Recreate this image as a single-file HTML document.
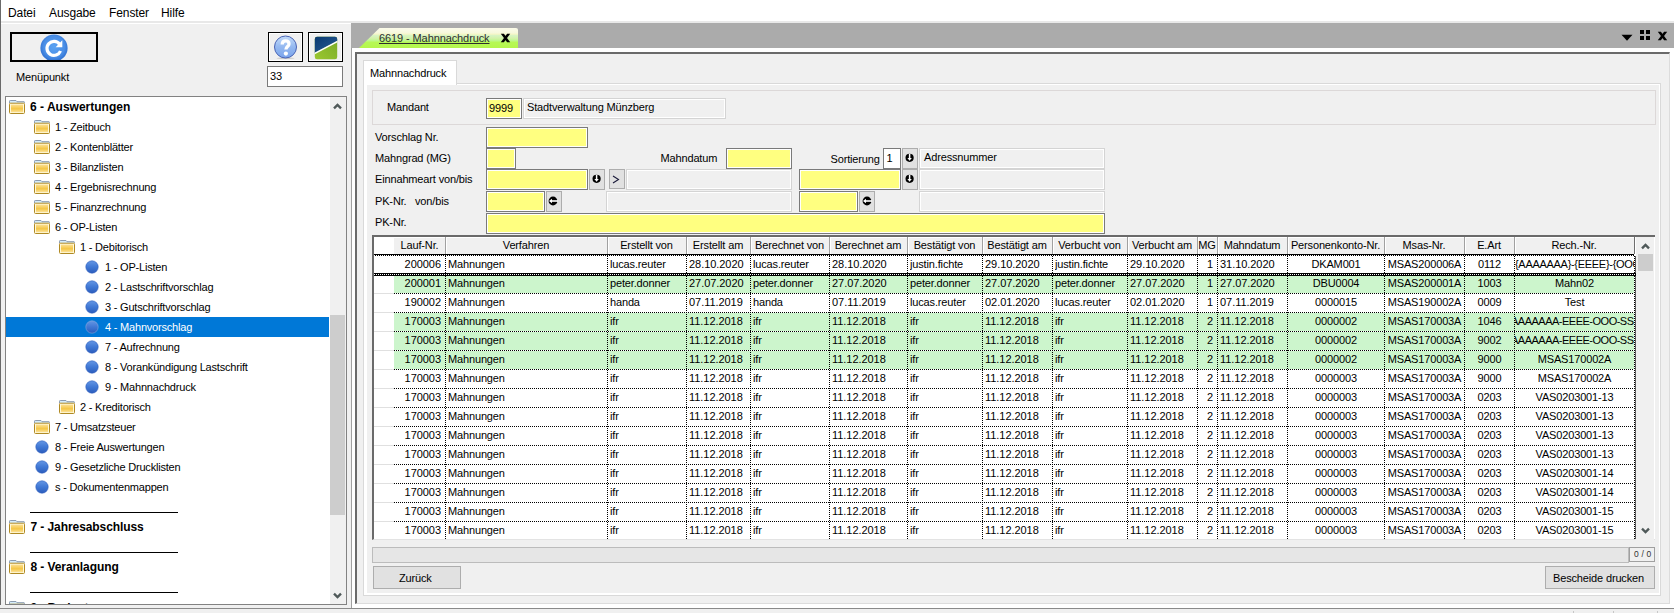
<!DOCTYPE html><html><head><meta charset="utf-8"><style>
html,body{margin:0;padding:0;}
body{width:1674px;height:613px;position:relative;overflow:hidden;background:#f0f0f0;font-family:"Liberation Sans", sans-serif;}
.t{position:absolute;white-space:nowrap;}
.r{position:absolute;box-sizing:border-box;}
svg{position:absolute;}
</style></head><body>
<div class="r" style="left:0px;top:0px;width:1674px;height:21px;background:#fff;"></div>
<div class="r" style="left:0px;top:21px;width:1674px;height:2px;background:#e8e8e8;"></div>
<div class="r" style="left:0px;top:23px;width:351px;height:1px;background:#fff;"></div>
<div class="r" style="left:0px;top:0px;width:1px;height:609px;background:#6a6a6a;"></div>
<div class="t" style="left:8px;top:6px;font-size:12px;line-height:14px;color:#000;letter-spacing:-0.1px;">Datei</div>
<div class="t" style="left:49px;top:6px;font-size:12px;line-height:14px;color:#000;letter-spacing:-0.1px;">Ausgabe</div>
<div class="t" style="left:109px;top:6px;font-size:12px;line-height:14px;color:#000;letter-spacing:-0.1px;">Fenster</div>
<div class="t" style="left:161px;top:6px;font-size:12px;line-height:14px;color:#000;letter-spacing:-0.1px;">Hilfe</div>
<div class="r" style="left:10px;top:32px;width:88px;height:30px;border:2px solid #000;background:#f0f0f0;"></div>
<div style="position:absolute;left:12px;top:34px;width:84px;height:26px;overflow:hidden">
<svg style="left:28px;top:0px" width="28" height="28" viewBox="0 0 28 28">
<defs><radialGradient id="rg" cx="50%" cy="45%" r="55%"><stop offset="0" stop-color="#5aa2f2"/><stop offset="0.7" stop-color="#4a8ee6"/><stop offset="1" stop-color="#2e6fd0"/></radialGradient></defs>
<circle cx="14" cy="14" r="13.6" fill="url(#rg)"/>
<path d="M19.6 10.2 A7 7 0 1 0 20.5 17" fill="none" stroke="#fff" stroke-width="3.2"/>
<path d="M22.3 6.2 L22.3 13.2 L15.6 13.2 Z" fill="#fff"/>
</svg>
</div>
<div class="t" style="left:16px;top:71px;font-size:11px;line-height:13px;color:#000;letter-spacing:-0.15px;">Menüpunkt</div>
<div class="r" style="left:268px;top:32px;width:35px;height:30px;border:1px solid #000;box-shadow:inset 0 0 0 1px #fff;background:#f0f0f0;"></div>
<svg style="left:273px;top:35px" width="25" height="25" viewBox="0 0 25 25">
<defs><linearGradient id="hg" x1="0" y1="0" x2="0" y2="1"><stop offset="0" stop-color="#c4dcfa"/><stop offset="0.5" stop-color="#94b8f0"/><stop offset="1" stop-color="#7aa4ec"/></linearGradient></defs>
<ellipse cx="12.5" cy="23.2" rx="9" ry="0.8" fill="#c8c8c8"/>
<circle cx="12.5" cy="12" r="11" fill="url(#hg)" stroke="#4a64b4" stroke-width="1"/>
<path d="M9.2 9.4 C9.2 6.8 10.8 5.9 12.6 5.9 C14.8 5.9 16 7.2 16 8.9 C16 11.6 12.9 11.6 12.9 14.6" fill="none" stroke="#fff" stroke-width="3.3"/><circle cx="12.9" cy="18.6" r="2.1" fill="#fff"/>
</svg>
<div class="r" style="left:308px;top:32px;width:35px;height:30px;border:1px solid #000;box-shadow:inset 0 0 0 1px #fff;background:#f0f0f0;"></div>
<svg style="left:314px;top:36px" width="24" height="24" viewBox="0 0 24 24">
<defs><clipPath id="lc"><rect x="0.8" y="0.8" width="22.4" height="22.4" rx="2.2"/></clipPath>
<linearGradient id="bl" x1="0" y1="0" x2="1" y2="1"><stop offset="0" stop-color="#08386e"/><stop offset="1" stop-color="#2a5e98"/></linearGradient>
<linearGradient id="gr" x1="0" y1="1" x2="1" y2="0"><stop offset="0" stop-color="#9cc830"/><stop offset="1" stop-color="#78aa28"/></linearGradient></defs>
<g clip-path="url(#lc)">
<rect x="0" y="0" width="24" height="24" fill="url(#gr)"/>
<path d="M0 0 L24 0 L24 4.6 L0 17.2 Z" fill="url(#bl)"/>
<path d="M0 17.8 L24 5.2" stroke="#fff" stroke-width="1.3"/>
</g></svg>
<div class="r" style="left:267px;top:66px;width:76px;height:21px;border:1px solid #7a7a7a;background:#fff;"></div>
<div class="t" style="left:270px;top:70px;font-size:11px;line-height:13px;color:#000;">33</div>
<div class="r" style="left:5px;top:96px;width:342px;height:509px;border:1px solid #828282;background:#fff;"></div>
<div class="r" style="left:330px;top:97px;width:16px;height:507px;background:#f0f0f0;"></div>
<div class="r" style="left:330px;top:315px;width:15px;height:200px;background:#cdcdcd;"></div>
<svg style="left:333px;top:102px" width="9" height="8" viewBox="0 0 9 8"><path d="M1 6.4 L4.5 2.9 L8 6.4" fill="none" stroke="#4f5959" stroke-width="2.3"/></svg>
<svg style="left:333px;top:592px" width="9" height="8" viewBox="0 0 9 8"><path d="M1 1.6 L4.5 5.1 L8 1.6" fill="none" stroke="#4f5959" stroke-width="2.3"/></svg>
<svg width="0" height="0" style="position:absolute"><defs>
<linearGradient id="fg" x1="0" y1="0" x2="0" y2="1"><stop offset="0" stop-color="#fcdf92"/><stop offset="0.55" stop-color="#f4c646"/><stop offset="1" stop-color="#fce29a"/></linearGradient>
<linearGradient id="cg" x1="0" y1="0" x2="0" y2="1"><stop offset="0" stop-color="#6496e4"/><stop offset="0.5" stop-color="#4078d4"/><stop offset="1" stop-color="#2c5cbc"/></linearGradient>
</defs></svg>
<div class="r" style="left:6px;top:317px;width:323px;height:20px;background:#0078d7;"></div>
<svg style="left:9px;top:100px" width="16" height="14" viewBox="0 0 16 14">
<path d="M0.5 3 L0.5 1.2 Q0.5 0.5 1.2 0.5 L7 0.5 L8 1.7 L15 1.7 Q15.5 1.7 15.5 2.4 L15.5 3" fill="#d4ecfc" stroke="#8c9cb0" stroke-width="1"/>
<rect x="0.5" y="3.2" width="15" height="10.3" rx="1" fill="#fff8d8" stroke="#b08a24" stroke-width="1"/>
<rect x="2" y="4.6" width="12" height="7.6" fill="url(#fg)"/>
</svg>
<div class="t" style="left:30px;top:100px;font-size:12px;line-height:14px;color:#000;font-weight:bold;letter-spacing:0px;">6 - Auswertungen</div>
<svg style="left:34px;top:120px" width="16" height="14" viewBox="0 0 16 14">
<path d="M0.5 3 L0.5 1.2 Q0.5 0.5 1.2 0.5 L7 0.5 L8 1.7 L15 1.7 Q15.5 1.7 15.5 2.4 L15.5 3" fill="#d4ecfc" stroke="#8c9cb0" stroke-width="1"/>
<rect x="0.5" y="3.2" width="15" height="10.3" rx="1" fill="#fff8d8" stroke="#b08a24" stroke-width="1"/>
<rect x="2" y="4.6" width="12" height="7.6" fill="url(#fg)"/>
</svg>
<div class="t" style="left:55px;top:121px;font-size:11px;line-height:13px;color:#000;letter-spacing:-0.2px;">1 - Zeitbuch</div>
<svg style="left:34px;top:140px" width="16" height="14" viewBox="0 0 16 14">
<path d="M0.5 3 L0.5 1.2 Q0.5 0.5 1.2 0.5 L7 0.5 L8 1.7 L15 1.7 Q15.5 1.7 15.5 2.4 L15.5 3" fill="#d4ecfc" stroke="#8c9cb0" stroke-width="1"/>
<rect x="0.5" y="3.2" width="15" height="10.3" rx="1" fill="#fff8d8" stroke="#b08a24" stroke-width="1"/>
<rect x="2" y="4.6" width="12" height="7.6" fill="url(#fg)"/>
</svg>
<div class="t" style="left:55px;top:141px;font-size:11px;line-height:13px;color:#000;letter-spacing:-0.2px;">2 - Kontenblätter</div>
<svg style="left:34px;top:160px" width="16" height="14" viewBox="0 0 16 14">
<path d="M0.5 3 L0.5 1.2 Q0.5 0.5 1.2 0.5 L7 0.5 L8 1.7 L15 1.7 Q15.5 1.7 15.5 2.4 L15.5 3" fill="#d4ecfc" stroke="#8c9cb0" stroke-width="1"/>
<rect x="0.5" y="3.2" width="15" height="10.3" rx="1" fill="#fff8d8" stroke="#b08a24" stroke-width="1"/>
<rect x="2" y="4.6" width="12" height="7.6" fill="url(#fg)"/>
</svg>
<div class="t" style="left:55px;top:161px;font-size:11px;line-height:13px;color:#000;letter-spacing:-0.2px;">3 - Bilanzlisten</div>
<svg style="left:34px;top:180px" width="16" height="14" viewBox="0 0 16 14">
<path d="M0.5 3 L0.5 1.2 Q0.5 0.5 1.2 0.5 L7 0.5 L8 1.7 L15 1.7 Q15.5 1.7 15.5 2.4 L15.5 3" fill="#d4ecfc" stroke="#8c9cb0" stroke-width="1"/>
<rect x="0.5" y="3.2" width="15" height="10.3" rx="1" fill="#fff8d8" stroke="#b08a24" stroke-width="1"/>
<rect x="2" y="4.6" width="12" height="7.6" fill="url(#fg)"/>
</svg>
<div class="t" style="left:55px;top:181px;font-size:11px;line-height:13px;color:#000;letter-spacing:-0.2px;">4 - Ergebnisrechnung</div>
<svg style="left:34px;top:200px" width="16" height="14" viewBox="0 0 16 14">
<path d="M0.5 3 L0.5 1.2 Q0.5 0.5 1.2 0.5 L7 0.5 L8 1.7 L15 1.7 Q15.5 1.7 15.5 2.4 L15.5 3" fill="#d4ecfc" stroke="#8c9cb0" stroke-width="1"/>
<rect x="0.5" y="3.2" width="15" height="10.3" rx="1" fill="#fff8d8" stroke="#b08a24" stroke-width="1"/>
<rect x="2" y="4.6" width="12" height="7.6" fill="url(#fg)"/>
</svg>
<div class="t" style="left:55px;top:201px;font-size:11px;line-height:13px;color:#000;letter-spacing:-0.2px;">5 - Finanzrechnung</div>
<svg style="left:34px;top:220px" width="16" height="14" viewBox="0 0 16 14">
<path d="M0.5 3 L0.5 1.2 Q0.5 0.5 1.2 0.5 L7 0.5 L8 1.7 L15 1.7 Q15.5 1.7 15.5 2.4 L15.5 3" fill="#d4ecfc" stroke="#8c9cb0" stroke-width="1"/>
<rect x="0.5" y="3.2" width="15" height="10.3" rx="1" fill="#fff8d8" stroke="#b08a24" stroke-width="1"/>
<rect x="2" y="4.6" width="12" height="7.6" fill="url(#fg)"/>
</svg>
<div class="t" style="left:55px;top:221px;font-size:11px;line-height:13px;color:#000;letter-spacing:-0.2px;">6 - OP-Listen</div>
<svg style="left:59px;top:240px" width="16" height="14" viewBox="0 0 16 14">
<path d="M0.5 3 L0.5 1.2 Q0.5 0.5 1.2 0.5 L7 0.5 L8 1.7 L15 1.7 Q15.5 1.7 15.5 2.4 L15.5 3" fill="#d4ecfc" stroke="#8c9cb0" stroke-width="1"/>
<rect x="0.5" y="3.2" width="15" height="10.3" rx="1" fill="#fff8d8" stroke="#b08a24" stroke-width="1"/>
<rect x="2" y="4.6" width="12" height="7.6" fill="url(#fg)"/>
</svg>
<div class="t" style="left:80px;top:241px;font-size:11px;line-height:13px;color:#000;letter-spacing:-0.2px;">1 - Debitorisch</div>
<svg style="left:85px;top:260px" width="14" height="14" viewBox="0 0 14 14"><circle cx="7" cy="7" r="6.2" fill="url(#cg)" stroke="#3060c0" stroke-width="0.6"/></svg>
<div class="t" style="left:105px;top:261px;font-size:11px;line-height:13px;color:#000;letter-spacing:-0.2px;">1 - OP-Listen</div>
<svg style="left:85px;top:280px" width="14" height="14" viewBox="0 0 14 14"><circle cx="7" cy="7" r="6.2" fill="url(#cg)" stroke="#3060c0" stroke-width="0.6"/></svg>
<div class="t" style="left:105px;top:281px;font-size:11px;line-height:13px;color:#000;letter-spacing:-0.2px;">2 - Lastschriftvorschlag</div>
<svg style="left:85px;top:300px" width="14" height="14" viewBox="0 0 14 14"><circle cx="7" cy="7" r="6.2" fill="url(#cg)" stroke="#3060c0" stroke-width="0.6"/></svg>
<div class="t" style="left:105px;top:301px;font-size:11px;line-height:13px;color:#000;letter-spacing:-0.2px;">3 - Gutschriftvorschlag</div>
<svg style="left:85px;top:320px" width="14" height="14" viewBox="0 0 14 14"><circle cx="7" cy="7" r="6.2" fill="url(#cg)" stroke="#8aa8d8" stroke-width="0.6"/></svg>
<div class="t" style="left:105px;top:321px;font-size:11px;line-height:13px;color:#fff;letter-spacing:-0.2px;">4 - Mahnvorschlag</div>
<svg style="left:85px;top:340px" width="14" height="14" viewBox="0 0 14 14"><circle cx="7" cy="7" r="6.2" fill="url(#cg)" stroke="#3060c0" stroke-width="0.6"/></svg>
<div class="t" style="left:105px;top:341px;font-size:11px;line-height:13px;color:#000;letter-spacing:-0.2px;">7 - Aufrechnung</div>
<svg style="left:85px;top:360px" width="14" height="14" viewBox="0 0 14 14"><circle cx="7" cy="7" r="6.2" fill="url(#cg)" stroke="#3060c0" stroke-width="0.6"/></svg>
<div class="t" style="left:105px;top:361px;font-size:11px;line-height:13px;color:#000;letter-spacing:-0.2px;">8 - Vorankündigung Lastschrift</div>
<svg style="left:85px;top:380px" width="14" height="14" viewBox="0 0 14 14"><circle cx="7" cy="7" r="6.2" fill="url(#cg)" stroke="#3060c0" stroke-width="0.6"/></svg>
<div class="t" style="left:105px;top:381px;font-size:11px;line-height:13px;color:#000;letter-spacing:-0.2px;">9 - Mahnnachdruck</div>
<svg style="left:59px;top:400px" width="16" height="14" viewBox="0 0 16 14">
<path d="M0.5 3 L0.5 1.2 Q0.5 0.5 1.2 0.5 L7 0.5 L8 1.7 L15 1.7 Q15.5 1.7 15.5 2.4 L15.5 3" fill="#d4ecfc" stroke="#8c9cb0" stroke-width="1"/>
<rect x="0.5" y="3.2" width="15" height="10.3" rx="1" fill="#fff8d8" stroke="#b08a24" stroke-width="1"/>
<rect x="2" y="4.6" width="12" height="7.6" fill="url(#fg)"/>
</svg>
<div class="t" style="left:80px;top:401px;font-size:11px;line-height:13px;color:#000;letter-spacing:-0.2px;">2 - Kreditorisch</div>
<svg style="left:34px;top:420px" width="16" height="14" viewBox="0 0 16 14">
<path d="M0.5 3 L0.5 1.2 Q0.5 0.5 1.2 0.5 L7 0.5 L8 1.7 L15 1.7 Q15.5 1.7 15.5 2.4 L15.5 3" fill="#d4ecfc" stroke="#8c9cb0" stroke-width="1"/>
<rect x="0.5" y="3.2" width="15" height="10.3" rx="1" fill="#fff8d8" stroke="#b08a24" stroke-width="1"/>
<rect x="2" y="4.6" width="12" height="7.6" fill="url(#fg)"/>
</svg>
<div class="t" style="left:55px;top:421px;font-size:11px;line-height:13px;color:#000;letter-spacing:-0.2px;">7 - Umsatzsteuer</div>
<svg style="left:35px;top:440px" width="14" height="14" viewBox="0 0 14 14"><circle cx="7" cy="7" r="6.2" fill="url(#cg)" stroke="#3060c0" stroke-width="0.6"/></svg>
<div class="t" style="left:55px;top:441px;font-size:11px;line-height:13px;color:#000;letter-spacing:-0.2px;">8 - Freie Auswertungen</div>
<svg style="left:35px;top:460px" width="14" height="14" viewBox="0 0 14 14"><circle cx="7" cy="7" r="6.2" fill="url(#cg)" stroke="#3060c0" stroke-width="0.6"/></svg>
<div class="t" style="left:55px;top:461px;font-size:11px;line-height:13px;color:#000;letter-spacing:-0.2px;">9 - Gesetzliche Drucklisten</div>
<svg style="left:35px;top:480px" width="14" height="14" viewBox="0 0 14 14"><circle cx="7" cy="7" r="6.2" fill="url(#cg)" stroke="#3060c0" stroke-width="0.6"/></svg>
<div class="t" style="left:55px;top:481px;font-size:11px;line-height:13px;color:#000;letter-spacing:-0.2px;">s - Dokumentenmappen</div>
<div class="r" style="left:30px;top:512px;width:148px;height:1px;background:#000;"></div>
<svg style="left:9px;top:520px" width="16" height="14" viewBox="0 0 16 14">
<path d="M0.5 3 L0.5 1.2 Q0.5 0.5 1.2 0.5 L7 0.5 L8 1.7 L15 1.7 Q15.5 1.7 15.5 2.4 L15.5 3" fill="#d4ecfc" stroke="#8c9cb0" stroke-width="1"/>
<rect x="0.5" y="3.2" width="15" height="10.3" rx="1" fill="#fff8d8" stroke="#b08a24" stroke-width="1"/>
<rect x="2" y="4.6" width="12" height="7.6" fill="url(#fg)"/>
</svg>
<div class="t" style="left:30.5px;top:520px;font-size:12px;line-height:14px;color:#000;font-weight:bold;letter-spacing:-0.08px;">7 - Jahresabschluss</div>
<div class="r" style="left:30px;top:552px;width:148px;height:1px;background:#000;"></div>
<svg style="left:9px;top:560px" width="16" height="14" viewBox="0 0 16 14">
<path d="M0.5 3 L0.5 1.2 Q0.5 0.5 1.2 0.5 L7 0.5 L8 1.7 L15 1.7 Q15.5 1.7 15.5 2.4 L15.5 3" fill="#d4ecfc" stroke="#8c9cb0" stroke-width="1"/>
<rect x="0.5" y="3.2" width="15" height="10.3" rx="1" fill="#fff8d8" stroke="#b08a24" stroke-width="1"/>
<rect x="2" y="4.6" width="12" height="7.6" fill="url(#fg)"/>
</svg>
<div class="t" style="left:30.5px;top:560px;font-size:12px;line-height:14px;color:#000;font-weight:bold;letter-spacing:-0.08px;">8 - Veranlagung</div>
<div class="r" style="left:30px;top:592px;width:148px;height:1px;background:#000;"></div>
<svg style="left:9px;top:601px" width="16" height="14" viewBox="0 0 16 14">
<path d="M0.5 3 L0.5 1.2 Q0.5 0.5 1.2 0.5 L7 0.5 L8 1.7 L15 1.7 Q15.5 1.7 15.5 2.4 L15.5 3" fill="#d4ecfc" stroke="#8c9cb0" stroke-width="1"/>
<rect x="0.5" y="3.2" width="15" height="10.3" rx="1" fill="#fff8d8" stroke="#b08a24" stroke-width="1"/>
<rect x="2" y="4.6" width="12" height="7.6" fill="url(#fg)"/>
</svg>
<div class="t" style="left:30.5px;top:601px;font-size:12px;line-height:14px;color:#000;font-weight:bold;letter-spacing:-0.08px;">9 - Budget</div>
<div class="r" style="left:5px;top:604px;width:342px;height:1px;background:#828282;"></div>
<div class="r" style="left:0px;top:605px;width:351px;height:4px;background:#f0f0f0;"></div>
<div class="r" style="left:351px;top:23px;width:1323px;height:25px;background:#ababab;"></div>
<svg style="left:358px;top:27px" width="162" height="22" viewBox="0 0 162 22">
<defs><linearGradient id="tg" x1="0" y1="0" x2="0" y2="1"><stop offset="0.04" stop-color="#fbfbe8"/><stop offset="0.25" stop-color="#f6f8dc"/><stop offset="0.31" stop-color="#f6f6c4"/><stop offset="0.37" stop-color="#d8f4c4"/><stop offset="0.52" stop-color="#d2f2a8"/><stop offset="0.62" stop-color="#bef890"/><stop offset="0.72" stop-color="#b6f856"/><stop offset="1" stop-color="#b4f64c"/></linearGradient></defs>
<path d="M1 21 L21.5 1 L158 1 Q160 1 160 3 L160 21 Z" fill="url(#tg)"/></svg>
<div class="t" style="left:379px;top:32px;font-size:11px;line-height:13px;color:#2e2e2e;letter-spacing:-0.1px;text-decoration:underline;">6619 - Mahnnachdruck</div>
<svg style="left:500px;top:33px" width="11" height="10" viewBox="0 0 11 10"><path d="M0.8 0.7 L3.9 0.7 L10.2 9.3 L7.1 9.3 Z M7.1 0.7 L10.2 0.7 L3.9 9.3 L0.8 9.3 Z" fill="#000"/></svg>
<svg style="left:1621px;top:34px" width="12" height="8" viewBox="0 0 12 8"><path d="M0.5 0.8 L11.5 0.8 L6 6.8 Z" fill="#000"/></svg>
<div class="r" style="left:1640px;top:30px;width:4px;height:4px;background:#000;"></div>
<div class="r" style="left:1646px;top:30px;width:4px;height:4px;background:#000;"></div>
<div class="r" style="left:1640px;top:36px;width:4px;height:4px;background:#000;"></div>
<div class="r" style="left:1646px;top:36px;width:4px;height:4px;background:#000;"></div>
<svg style="left:1657px;top:31px" width="11" height="10" viewBox="0 0 11 10"><path d="M0.8 0.7 L3.9 0.7 L10.2 9.3 L7.1 9.3 Z M7.1 0.7 L10.2 0.7 L3.9 9.3 L0.8 9.3 Z" fill="#000"/></svg>
<div class="r" style="left:351px;top:48px;width:1px;height:561px;background:#a0a0a0;"></div>
<div class="r" style="left:352px;top:48px;width:1322px;height:561px;background:#fff;"></div>
<div class="r" style="left:355px;top:52px;width:1315px;height:552px;border-left:2px solid #6a6a6a;border-top:2px solid #6a6a6a;border-right:1px solid #dcdcdc;border-bottom:1px solid #dcdcdc;background:#f0f0f0;"></div>
<div class="r" style="left:0px;top:608px;width:1674px;height:1px;background:#8a8a8a;"></div>
<div class="r" style="left:0px;top:609px;width:1674px;height:4px;background:#f0f0f0;"></div>
<div class="r" style="left:1573px;top:611px;width:1px;height:2px;background:#c8c8c8;"></div>
<div class="r" style="left:1613px;top:611px;width:1px;height:2px;background:#c8c8c8;"></div>
<div class="r" style="left:1657px;top:611px;width:1px;height:2px;background:#c8c8c8;"></div>
<div class="r" style="left:363px;top:83px;width:1298px;height:513px;border:1px solid #d9d9d9;box-shadow:inset 3px 1px 0 #fff, inset -1px -2px 0 #fff;background:#f0f0f0;"></div>
<div class="r" style="left:363px;top:60px;width:94px;height:25px;border:1px solid #d9d9d9;border-bottom:none;background:#fff;"></div>
<div class="t" style="left:370px;top:67px;font-size:11px;line-height:13px;color:#000;letter-spacing:-0.15px;">Mahnnachdruck</div>
<div class="r" style="left:372px;top:90px;width:1284px;height:35px;border:1px solid #dcd8d8;"></div>
<div class="t" style="left:387px;top:100.5px;font-size:11px;line-height:13px;color:#000;letter-spacing:-0.15px;">Mandant</div>
<div class="r" style="left:486px;top:98px;width:36px;height:21px;border:1px solid #7a7a7a;box-shadow:inset 0 0 0 1px #fff;background:#ffff80;"></div>
<div class="t" style="left:489px;top:101.5px;font-size:11px;line-height:13px;color:#000;letter-spacing:-0.1px;">9999</div>
<div class="r" style="left:523px;top:98px;width:203px;height:21px;border:1px solid #d4d4d4;box-shadow:inset 0 0 0 1px #fff;background:#f0f0f0;"></div>
<div class="t" style="left:527px;top:101px;font-size:11px;line-height:13px;color:#000;letter-spacing:-0.15px;">Stadtverwaltung Münzberg</div>
<div class="t" style="left:375px;top:131px;font-size:11px;line-height:13px;color:#000;letter-spacing:-0.15px;">Vorschlag Nr.</div>
<div class="t" style="left:375px;top:152px;font-size:11px;line-height:13px;color:#000;letter-spacing:-0.15px;">Mahngrad (MG)</div>
<div class="t" style="left:375px;top:173px;font-size:11px;line-height:13px;color:#000;letter-spacing:-0.15px;">Einnahmeart von/bis</div>
<div class="t" style="left:375px;top:194.5px;font-size:11px;line-height:13px;color:#000;letter-spacing:-0.15px;">PK-Nr.</div>
<div class="t" style="left:415px;top:194.5px;font-size:11px;line-height:13px;color:#000;letter-spacing:-0.15px;">von/bis</div>
<div class="t" style="left:375px;top:216px;font-size:11px;line-height:13px;color:#000;letter-spacing:-0.15px;">PK-Nr.</div>
<div class="r" style="left:486px;top:127px;width:102px;height:21px;border:1px solid #7a7a7a;box-shadow:inset 0 0 0 1px #fff;background:#ffff80;"></div>
<div class="r" style="left:486px;top:148px;width:30px;height:21px;border:1px solid #7a7a7a;box-shadow:inset 0 0 0 1px #fff;background:#ffff80;"></div>
<div class="t" style="left:660.5px;top:152px;font-size:11px;line-height:13px;color:#000;letter-spacing:-0.15px;">Mahndatum</div>
<div class="r" style="left:726px;top:148px;width:66px;height:21px;border:1px solid #7a7a7a;box-shadow:inset 0 0 0 1px #fff;background:#ffff80;"></div>
<div class="t" style="left:830.5px;top:153px;font-size:11px;line-height:13px;color:#000;letter-spacing:-0.15px;">Sortierung</div>
<div class="r" style="left:883px;top:148px;width:18px;height:21px;border:1px solid #7a7a7a;box-shadow:inset 0 0 0 1px #fff;background:#fff;"></div>
<div class="t" style="left:886.5px;top:152px;font-size:11px;line-height:13px;color:#000;">1</div>
<div class="r" style="left:902px;top:148px;width:16px;height:21px;border:1px solid #adadad;background:#e1e1e1;"></div>
<svg style="left:905px;top:153px" width="10" height="10" viewBox="0 0 10 10"><circle cx="4.6" cy="4.8" r="4.1" fill="#000"/><path d="M4.6 0.8 L4.6 5.6" stroke="#fff" stroke-width="1.5"/><path d="M2.4 5 L6.8 5 L4.6 7.8 Z" fill="#fff"/></svg>
<div class="r" style="left:919px;top:148px;width:186px;height:21px;border:1px solid #d4d4d4;box-shadow:inset 0 0 0 1px #fff;background:#f0f0f0;"></div>
<div class="t" style="left:924px;top:151px;font-size:11px;line-height:13px;color:#000;letter-spacing:-0.15px;">Adressnummer</div>
<div class="r" style="left:486px;top:169px;width:102px;height:21px;border:1px solid #7a7a7a;box-shadow:inset 0 0 0 1px #fff;background:#ffff80;"></div>
<div class="r" style="left:589px;top:169px;width:16px;height:21px;border:1px solid #adadad;background:#e1e1e1;"></div>
<svg style="left:592px;top:174px" width="10" height="10" viewBox="0 0 10 10"><circle cx="4.6" cy="4.8" r="4.1" fill="#000"/><path d="M4.6 0.8 L4.6 5.6" stroke="#fff" stroke-width="1.5"/><path d="M2.4 5 L6.8 5 L4.6 7.8 Z" fill="#fff"/></svg>
<div class="r" style="left:609px;top:169px;width:16px;height:20px;border:1px solid #adadad;background:#e1e1e1;"></div>
<svg style="left:612px;top:175px" width="8" height="9" viewBox="0 0 8 9"><path d="M1 1 L6.5 4.5 L1 8" fill="none" stroke="#1a1a3a" stroke-width="1.1"/></svg>
<div class="r" style="left:626px;top:169px;width:166px;height:21px;border:1px solid #d4d4d4;box-shadow:inset 0 0 0 1px #fff;background:#f0f0f0;"></div>
<div class="r" style="left:799px;top:169px;width:102px;height:21px;border:1px solid #7a7a7a;box-shadow:inset 0 0 0 1px #fff;background:#ffff80;"></div>
<div class="r" style="left:902px;top:169px;width:16px;height:21px;border:1px solid #adadad;background:#e1e1e1;"></div>
<svg style="left:905px;top:174px" width="10" height="10" viewBox="0 0 10 10"><circle cx="4.6" cy="4.8" r="4.1" fill="#000"/><path d="M4.6 0.8 L4.6 5.6" stroke="#fff" stroke-width="1.5"/><path d="M2.4 5 L6.8 5 L4.6 7.8 Z" fill="#fff"/></svg>
<div class="r" style="left:919px;top:169px;width:186px;height:21px;border:1px solid #d4d4d4;box-shadow:inset 0 0 0 1px #fff;background:#f0f0f0;"></div>
<div class="r" style="left:486px;top:191px;width:59px;height:21px;border:1px solid #7a7a7a;box-shadow:inset 0 0 0 1px #fff;background:#ffff80;"></div>
<div class="r" style="left:546px;top:191px;width:16px;height:21px;border:1px solid #adadad;background:#e1e1e1;"></div>
<svg style="left:548px;top:196px" width="10" height="10" viewBox="0 0 10 10"><circle cx="5" cy="5" r="4.4" fill="#000"/><path d="M3.5 5 L10 5" stroke="#fff" stroke-width="1.6"/><path d="M1 5 L4 2.8 L4 7.2 Z" fill="#fff"/></svg>
<div class="r" style="left:606px;top:191px;width:186px;height:21px;border:1px solid #d4d4d4;box-shadow:inset 0 0 0 1px #fff;background:#f0f0f0;"></div>
<div class="r" style="left:799px;top:191px;width:59px;height:21px;border:1px solid #7a7a7a;box-shadow:inset 0 0 0 1px #fff;background:#ffff80;"></div>
<div class="r" style="left:859px;top:191px;width:16px;height:21px;border:1px solid #adadad;background:#e1e1e1;"></div>
<svg style="left:862px;top:196px" width="10" height="10" viewBox="0 0 10 10"><circle cx="5" cy="5" r="4.4" fill="#000"/><path d="M3.5 5 L10 5" stroke="#fff" stroke-width="1.6"/><path d="M1 5 L4 2.8 L4 7.2 Z" fill="#fff"/></svg>
<div class="r" style="left:919px;top:191px;width:186px;height:21px;border:1px solid #d4d4d4;box-shadow:inset 0 0 0 1px #fff;background:#f0f0f0;"></div>
<div class="r" style="left:486px;top:213px;width:619px;height:21px;border:1px solid #7a7a7a;box-shadow:inset 0 0 0 1px #fff;background:#ffff80;"></div>
<div class="r" style="left:372px;top:235px;width:1283px;height:305px;background:#fff;border-left:2px solid #6a6a6a;border-top:2px solid #6a6a6a;border-bottom:1px solid #e3e3e3;"></div>
<div class="r" style="left:394px;top:237px;width:1240px;height:17px;background:#f0f0f0;"></div>
<div class="r" style="left:394px;top:237px;width:1241px;height:1px;background:#fff;"></div>
<div class="r" style="left:445px;top:237px;width:1px;height:17px;background:#a0a0a0;"></div>
<div class="r" style="left:446px;top:238px;width:1px;height:16px;background:#fff;"></div>
<div class="t" style="left:394px;top:239px;font-size:11px;line-height:13px;color:#000;letter-spacing:-0.15px;width:51px;text-align:center;">Lauf-Nr.</div>
<div class="r" style="left:607px;top:237px;width:1px;height:17px;background:#a0a0a0;"></div>
<div class="r" style="left:608px;top:238px;width:1px;height:16px;background:#fff;"></div>
<div class="t" style="left:445px;top:239px;font-size:11px;line-height:13px;color:#000;letter-spacing:-0.15px;width:162px;text-align:center;">Verfahren</div>
<div class="r" style="left:686px;top:237px;width:1px;height:17px;background:#a0a0a0;"></div>
<div class="r" style="left:687px;top:238px;width:1px;height:16px;background:#fff;"></div>
<div class="t" style="left:607px;top:239px;font-size:11px;line-height:13px;color:#000;letter-spacing:-0.15px;width:79px;text-align:center;">Erstellt von</div>
<div class="r" style="left:750px;top:237px;width:1px;height:17px;background:#a0a0a0;"></div>
<div class="r" style="left:751px;top:238px;width:1px;height:16px;background:#fff;"></div>
<div class="t" style="left:686px;top:239px;font-size:11px;line-height:13px;color:#000;letter-spacing:-0.15px;width:64px;text-align:center;">Erstellt am</div>
<div class="r" style="left:829px;top:237px;width:1px;height:17px;background:#a0a0a0;"></div>
<div class="r" style="left:830px;top:238px;width:1px;height:16px;background:#fff;"></div>
<div class="t" style="left:750px;top:239px;font-size:11px;line-height:13px;color:#000;letter-spacing:-0.15px;width:79px;text-align:center;">Berechnet von</div>
<div class="r" style="left:907px;top:237px;width:1px;height:17px;background:#a0a0a0;"></div>
<div class="r" style="left:908px;top:238px;width:1px;height:16px;background:#fff;"></div>
<div class="t" style="left:829px;top:239px;font-size:11px;line-height:13px;color:#000;letter-spacing:-0.15px;width:78px;text-align:center;">Berechnet am</div>
<div class="r" style="left:982px;top:237px;width:1px;height:17px;background:#a0a0a0;"></div>
<div class="r" style="left:983px;top:238px;width:1px;height:16px;background:#fff;"></div>
<div class="t" style="left:907px;top:239px;font-size:11px;line-height:13px;color:#000;letter-spacing:-0.15px;width:75px;text-align:center;">Bestätigt von</div>
<div class="r" style="left:1052px;top:237px;width:1px;height:17px;background:#a0a0a0;"></div>
<div class="r" style="left:1053px;top:238px;width:1px;height:16px;background:#fff;"></div>
<div class="t" style="left:982px;top:239px;font-size:11px;line-height:13px;color:#000;letter-spacing:-0.15px;width:70px;text-align:center;">Bestätigt am</div>
<div class="r" style="left:1127px;top:237px;width:1px;height:17px;background:#a0a0a0;"></div>
<div class="r" style="left:1128px;top:238px;width:1px;height:16px;background:#fff;"></div>
<div class="t" style="left:1052px;top:239px;font-size:11px;line-height:13px;color:#000;letter-spacing:-0.15px;width:75px;text-align:center;">Verbucht von</div>
<div class="r" style="left:1197px;top:237px;width:1px;height:17px;background:#a0a0a0;"></div>
<div class="r" style="left:1198px;top:238px;width:1px;height:16px;background:#fff;"></div>
<div class="t" style="left:1127px;top:239px;font-size:11px;line-height:13px;color:#000;letter-spacing:-0.15px;width:70px;text-align:center;">Verbucht am</div>
<div class="r" style="left:1217px;top:237px;width:1px;height:17px;background:#a0a0a0;"></div>
<div class="r" style="left:1218px;top:238px;width:1px;height:16px;background:#fff;"></div>
<div class="t" style="left:1197px;top:239px;font-size:11px;line-height:13px;color:#000;letter-spacing:-0.15px;width:20px;text-align:center;">MG</div>
<div class="r" style="left:1287px;top:237px;width:1px;height:17px;background:#a0a0a0;"></div>
<div class="r" style="left:1288px;top:238px;width:1px;height:16px;background:#fff;"></div>
<div class="t" style="left:1217px;top:239px;font-size:11px;line-height:13px;color:#000;letter-spacing:-0.15px;width:70px;text-align:center;">Mahndatum</div>
<div class="r" style="left:1384px;top:237px;width:1px;height:17px;background:#a0a0a0;"></div>
<div class="r" style="left:1385px;top:238px;width:1px;height:16px;background:#fff;"></div>
<div class="t" style="left:1287px;top:239px;font-size:11px;line-height:13px;color:#000;letter-spacing:-0.15px;width:97px;text-align:center;">Personenkonto-Nr.</div>
<div class="r" style="left:1464px;top:237px;width:1px;height:17px;background:#a0a0a0;"></div>
<div class="r" style="left:1465px;top:238px;width:1px;height:16px;background:#fff;"></div>
<div class="t" style="left:1384px;top:239px;font-size:11px;line-height:13px;color:#000;letter-spacing:-0.15px;width:80px;text-align:center;">Msas-Nr.</div>
<div class="r" style="left:1514px;top:237px;width:1px;height:17px;background:#a0a0a0;"></div>
<div class="r" style="left:1515px;top:238px;width:1px;height:16px;background:#fff;"></div>
<div class="t" style="left:1464px;top:239px;font-size:11px;line-height:13px;color:#000;letter-spacing:-0.15px;width:50px;text-align:center;">E.Art</div>
<div class="r" style="left:1634px;top:237px;width:1px;height:17px;background:#a0a0a0;"></div>
<div class="r" style="left:1635px;top:238px;width:1px;height:16px;background:#fff;"></div>
<div class="t" style="left:1514px;top:239px;font-size:11px;line-height:13px;color:#000;letter-spacing:-0.15px;width:120px;text-align:center;">Rech.-Nr.</div>
<div class="r" style="left:1634px;top:237px;width:1px;height:17px;background:#6e6e6e;"></div>
<div class="r" style="left:1635px;top:237px;width:1px;height:17px;background:#fff;"></div>
<div class="r" style="left:1636px;top:237px;width:18px;height:303px;background:#f0f0f0;"></div>
<div class="r" style="left:1638px;top:254px;width:15px;height:17px;background:#cdcdcd;"></div>
<svg style="left:1641px;top:242px" width="9" height="8" viewBox="0 0 9 8"><path d="M1 6.4 L4.5 2.9 L8 6.4" fill="none" stroke="#4f5959" stroke-width="2.3"/></svg>
<svg style="left:1641px;top:527px" width="9" height="8" viewBox="0 0 9 8"><path d="M1 1.6 L4.5 5.1 L8 1.6" fill="none" stroke="#4f5959" stroke-width="2.3"/></svg>
<div class="r" style="left:374px;top:274px;width:20px;height:1px;background:#e0e0e0;"></div>
<div class="r" style="left:394px;top:274px;width:1240px;height:1px;background-image:repeating-linear-gradient(to right,#000 0,#000 1px,transparent 1px,transparent 2px);"></div>
<div class="t" style="left:394px;top:258px;font-size:11px;line-height:13px;color:#000;letter-spacing:-0.05px;width:47px;text-align:right;overflow:hidden;">200006</div>
<div class="t" style="left:448px;top:258px;font-size:11px;line-height:13px;color:#000;letter-spacing:-0.15px;width:159px;text-align:left;overflow:hidden;">Mahnungen</div>
<div class="t" style="left:610px;top:258px;font-size:11px;line-height:13px;color:#000;letter-spacing:-0.15px;width:76px;text-align:left;overflow:hidden;">lucas.reuter</div>
<div class="t" style="left:689px;top:258px;font-size:11px;line-height:13px;color:#000;letter-spacing:-0.05px;width:61px;text-align:left;overflow:hidden;">28.10.2020</div>
<div class="t" style="left:753px;top:258px;font-size:11px;line-height:13px;color:#000;letter-spacing:-0.15px;width:76px;text-align:left;overflow:hidden;">lucas.reuter</div>
<div class="t" style="left:832px;top:258px;font-size:11px;line-height:13px;color:#000;letter-spacing:-0.05px;width:75px;text-align:left;overflow:hidden;">28.10.2020</div>
<div class="t" style="left:910px;top:258px;font-size:11px;line-height:13px;color:#000;letter-spacing:-0.15px;width:72px;text-align:left;overflow:hidden;">justin.fichte</div>
<div class="t" style="left:985px;top:258px;font-size:11px;line-height:13px;color:#000;letter-spacing:-0.05px;width:67px;text-align:left;overflow:hidden;">29.10.2020</div>
<div class="t" style="left:1055px;top:258px;font-size:11px;line-height:13px;color:#000;letter-spacing:-0.15px;width:72px;text-align:left;overflow:hidden;">justin.fichte</div>
<div class="t" style="left:1130px;top:258px;font-size:11px;line-height:13px;color:#000;letter-spacing:-0.05px;width:67px;text-align:left;overflow:hidden;">29.10.2020</div>
<div class="t" style="left:1197px;top:258px;font-size:11px;line-height:13px;color:#000;letter-spacing:-0.05px;width:16px;text-align:right;overflow:hidden;">1</div>
<div class="t" style="left:1220px;top:258px;font-size:11px;line-height:13px;color:#000;letter-spacing:-0.05px;width:67px;text-align:left;overflow:hidden;">31.10.2020</div>
<div class="t" style="left:1288px;top:258px;width:96px;height:16px;overflow:hidden;font-size:11px;line-height:13px;letter-spacing:-0.15px;"><div style="position:absolute;left:50%;transform:translateX(-50%);white-space:nowrap">DKAM001</div></div>
<div class="t" style="left:1385px;top:258px;width:79px;height:16px;overflow:hidden;font-size:11px;line-height:13px;letter-spacing:-0.15px;"><div style="position:absolute;left:50%;transform:translateX(-50%);white-space:nowrap">MSAS200006A</div></div>
<div class="t" style="left:1465px;top:258px;width:49px;height:16px;overflow:hidden;font-size:11px;line-height:13px;letter-spacing:-0.15px;"><div style="position:absolute;left:50%;transform:translateX(-50%);white-space:nowrap">0112</div></div>
<div class="t" style="left:1515px;top:258px;width:119px;height:16px;overflow:hidden;font-size:11px;line-height:13px;letter-spacing:-0.3px;"><div style="position:absolute;left:0px;white-space:nowrap">{AAAAAAA}-{EEEE}-{OOO}</div></div>
<div class="r" style="left:394px;top:275px;width:1240px;height:18px;background:#ccf5cc;"></div>
<div class="r" style="left:374px;top:293px;width:20px;height:1px;background:#e0e0e0;"></div>
<div class="r" style="left:394px;top:293px;width:1240px;height:1px;background-image:repeating-linear-gradient(to right,#000 0,#000 1px,transparent 1px,transparent 2px);"></div>
<div class="t" style="left:394px;top:277px;font-size:11px;line-height:13px;color:#000;letter-spacing:-0.05px;width:47px;text-align:right;overflow:hidden;">200001</div>
<div class="t" style="left:448px;top:277px;font-size:11px;line-height:13px;color:#000;letter-spacing:-0.15px;width:159px;text-align:left;overflow:hidden;">Mahnungen</div>
<div class="t" style="left:610px;top:277px;font-size:11px;line-height:13px;color:#000;letter-spacing:-0.15px;width:76px;text-align:left;overflow:hidden;">peter.donner</div>
<div class="t" style="left:689px;top:277px;font-size:11px;line-height:13px;color:#000;letter-spacing:-0.05px;width:61px;text-align:left;overflow:hidden;">27.07.2020</div>
<div class="t" style="left:753px;top:277px;font-size:11px;line-height:13px;color:#000;letter-spacing:-0.15px;width:76px;text-align:left;overflow:hidden;">peter.donner</div>
<div class="t" style="left:832px;top:277px;font-size:11px;line-height:13px;color:#000;letter-spacing:-0.05px;width:75px;text-align:left;overflow:hidden;">27.07.2020</div>
<div class="t" style="left:910px;top:277px;font-size:11px;line-height:13px;color:#000;letter-spacing:-0.15px;width:72px;text-align:left;overflow:hidden;">peter.donner</div>
<div class="t" style="left:985px;top:277px;font-size:11px;line-height:13px;color:#000;letter-spacing:-0.05px;width:67px;text-align:left;overflow:hidden;">27.07.2020</div>
<div class="t" style="left:1055px;top:277px;font-size:11px;line-height:13px;color:#000;letter-spacing:-0.15px;width:72px;text-align:left;overflow:hidden;">peter.donner</div>
<div class="t" style="left:1130px;top:277px;font-size:11px;line-height:13px;color:#000;letter-spacing:-0.05px;width:67px;text-align:left;overflow:hidden;">27.07.2020</div>
<div class="t" style="left:1197px;top:277px;font-size:11px;line-height:13px;color:#000;letter-spacing:-0.05px;width:16px;text-align:right;overflow:hidden;">1</div>
<div class="t" style="left:1220px;top:277px;font-size:11px;line-height:13px;color:#000;letter-spacing:-0.05px;width:67px;text-align:left;overflow:hidden;">27.07.2020</div>
<div class="t" style="left:1288px;top:277px;width:96px;height:16px;overflow:hidden;font-size:11px;line-height:13px;letter-spacing:-0.15px;"><div style="position:absolute;left:50%;transform:translateX(-50%);white-space:nowrap">DBU0004</div></div>
<div class="t" style="left:1385px;top:277px;width:79px;height:16px;overflow:hidden;font-size:11px;line-height:13px;letter-spacing:-0.15px;"><div style="position:absolute;left:50%;transform:translateX(-50%);white-space:nowrap">MSAS200001A</div></div>
<div class="t" style="left:1465px;top:277px;width:49px;height:16px;overflow:hidden;font-size:11px;line-height:13px;letter-spacing:-0.15px;"><div style="position:absolute;left:50%;transform:translateX(-50%);white-space:nowrap">1003</div></div>
<div class="t" style="left:1515px;top:277px;width:119px;height:16px;overflow:hidden;font-size:11px;line-height:13px;letter-spacing:-0.15px;"><div style="position:absolute;left:50%;transform:translateX(-50%);white-space:nowrap">Mahn02</div></div>
<div class="r" style="left:374px;top:312px;width:20px;height:1px;background:#e0e0e0;"></div>
<div class="r" style="left:394px;top:312px;width:1240px;height:1px;background-image:repeating-linear-gradient(to right,#000 0,#000 1px,transparent 1px,transparent 2px);"></div>
<div class="t" style="left:394px;top:296px;font-size:11px;line-height:13px;color:#000;letter-spacing:-0.05px;width:47px;text-align:right;overflow:hidden;">190002</div>
<div class="t" style="left:448px;top:296px;font-size:11px;line-height:13px;color:#000;letter-spacing:-0.15px;width:159px;text-align:left;overflow:hidden;">Mahnungen</div>
<div class="t" style="left:610px;top:296px;font-size:11px;line-height:13px;color:#000;letter-spacing:-0.15px;width:76px;text-align:left;overflow:hidden;">handa</div>
<div class="t" style="left:689px;top:296px;font-size:11px;line-height:13px;color:#000;letter-spacing:-0.05px;width:61px;text-align:left;overflow:hidden;">07.11.2019</div>
<div class="t" style="left:753px;top:296px;font-size:11px;line-height:13px;color:#000;letter-spacing:-0.15px;width:76px;text-align:left;overflow:hidden;">handa</div>
<div class="t" style="left:832px;top:296px;font-size:11px;line-height:13px;color:#000;letter-spacing:-0.05px;width:75px;text-align:left;overflow:hidden;">07.11.2019</div>
<div class="t" style="left:910px;top:296px;font-size:11px;line-height:13px;color:#000;letter-spacing:-0.15px;width:72px;text-align:left;overflow:hidden;">lucas.reuter</div>
<div class="t" style="left:985px;top:296px;font-size:11px;line-height:13px;color:#000;letter-spacing:-0.05px;width:67px;text-align:left;overflow:hidden;">02.01.2020</div>
<div class="t" style="left:1055px;top:296px;font-size:11px;line-height:13px;color:#000;letter-spacing:-0.15px;width:72px;text-align:left;overflow:hidden;">lucas.reuter</div>
<div class="t" style="left:1130px;top:296px;font-size:11px;line-height:13px;color:#000;letter-spacing:-0.05px;width:67px;text-align:left;overflow:hidden;">02.01.2020</div>
<div class="t" style="left:1197px;top:296px;font-size:11px;line-height:13px;color:#000;letter-spacing:-0.05px;width:16px;text-align:right;overflow:hidden;">1</div>
<div class="t" style="left:1220px;top:296px;font-size:11px;line-height:13px;color:#000;letter-spacing:-0.05px;width:67px;text-align:left;overflow:hidden;">07.11.2019</div>
<div class="t" style="left:1288px;top:296px;width:96px;height:16px;overflow:hidden;font-size:11px;line-height:13px;letter-spacing:-0.15px;"><div style="position:absolute;left:50%;transform:translateX(-50%);white-space:nowrap">0000015</div></div>
<div class="t" style="left:1385px;top:296px;width:79px;height:16px;overflow:hidden;font-size:11px;line-height:13px;letter-spacing:-0.15px;"><div style="position:absolute;left:50%;transform:translateX(-50%);white-space:nowrap">MSAS190002A</div></div>
<div class="t" style="left:1465px;top:296px;width:49px;height:16px;overflow:hidden;font-size:11px;line-height:13px;letter-spacing:-0.15px;"><div style="position:absolute;left:50%;transform:translateX(-50%);white-space:nowrap">0009</div></div>
<div class="t" style="left:1515px;top:296px;width:119px;height:16px;overflow:hidden;font-size:11px;line-height:13px;letter-spacing:-0.15px;"><div style="position:absolute;left:50%;transform:translateX(-50%);white-space:nowrap">Test</div></div>
<div class="r" style="left:394px;top:313px;width:1240px;height:18px;background:#ccf5cc;"></div>
<div class="r" style="left:374px;top:331px;width:20px;height:1px;background:#e0e0e0;"></div>
<div class="r" style="left:394px;top:331px;width:1240px;height:1px;background-image:repeating-linear-gradient(to right,#000 0,#000 1px,transparent 1px,transparent 2px);"></div>
<div class="t" style="left:394px;top:315px;font-size:11px;line-height:13px;color:#000;letter-spacing:-0.05px;width:47px;text-align:right;overflow:hidden;">170003</div>
<div class="t" style="left:448px;top:315px;font-size:11px;line-height:13px;color:#000;letter-spacing:-0.15px;width:159px;text-align:left;overflow:hidden;">Mahnungen</div>
<div class="t" style="left:610px;top:315px;font-size:11px;line-height:13px;color:#000;letter-spacing:-0.15px;width:76px;text-align:left;overflow:hidden;">ifr</div>
<div class="t" style="left:689px;top:315px;font-size:11px;line-height:13px;color:#000;letter-spacing:-0.05px;width:61px;text-align:left;overflow:hidden;">11.12.2018</div>
<div class="t" style="left:753px;top:315px;font-size:11px;line-height:13px;color:#000;letter-spacing:-0.15px;width:76px;text-align:left;overflow:hidden;">ifr</div>
<div class="t" style="left:832px;top:315px;font-size:11px;line-height:13px;color:#000;letter-spacing:-0.05px;width:75px;text-align:left;overflow:hidden;">11.12.2018</div>
<div class="t" style="left:910px;top:315px;font-size:11px;line-height:13px;color:#000;letter-spacing:-0.15px;width:72px;text-align:left;overflow:hidden;">ifr</div>
<div class="t" style="left:985px;top:315px;font-size:11px;line-height:13px;color:#000;letter-spacing:-0.05px;width:67px;text-align:left;overflow:hidden;">11.12.2018</div>
<div class="t" style="left:1055px;top:315px;font-size:11px;line-height:13px;color:#000;letter-spacing:-0.15px;width:72px;text-align:left;overflow:hidden;">ifr</div>
<div class="t" style="left:1130px;top:315px;font-size:11px;line-height:13px;color:#000;letter-spacing:-0.05px;width:67px;text-align:left;overflow:hidden;">11.12.2018</div>
<div class="t" style="left:1197px;top:315px;font-size:11px;line-height:13px;color:#000;letter-spacing:-0.05px;width:16px;text-align:right;overflow:hidden;">2</div>
<div class="t" style="left:1220px;top:315px;font-size:11px;line-height:13px;color:#000;letter-spacing:-0.05px;width:67px;text-align:left;overflow:hidden;">11.12.2018</div>
<div class="t" style="left:1288px;top:315px;width:96px;height:16px;overflow:hidden;font-size:11px;line-height:13px;letter-spacing:-0.15px;"><div style="position:absolute;left:50%;transform:translateX(-50%);white-space:nowrap">0000002</div></div>
<div class="t" style="left:1385px;top:315px;width:79px;height:16px;overflow:hidden;font-size:11px;line-height:13px;letter-spacing:-0.15px;"><div style="position:absolute;left:50%;transform:translateX(-50%);white-space:nowrap">MSAS170003A</div></div>
<div class="t" style="left:1465px;top:315px;width:49px;height:16px;overflow:hidden;font-size:11px;line-height:13px;letter-spacing:-0.15px;"><div style="position:absolute;left:50%;transform:translateX(-50%);white-space:nowrap">1046</div></div>
<div class="t" style="left:1515px;top:315px;width:119px;height:16px;overflow:hidden;font-size:11px;line-height:13px;letter-spacing:-0.5px;"><div style="position:absolute;left:-4px;white-space:nowrap">AAAAAAA-EEEE-OOO-SSS</div></div>
<div class="r" style="left:394px;top:332px;width:1240px;height:18px;background:#ccf5cc;"></div>
<div class="r" style="left:374px;top:350px;width:20px;height:1px;background:#e0e0e0;"></div>
<div class="r" style="left:394px;top:350px;width:1240px;height:1px;background-image:repeating-linear-gradient(to right,#000 0,#000 1px,transparent 1px,transparent 2px);"></div>
<div class="t" style="left:394px;top:334px;font-size:11px;line-height:13px;color:#000;letter-spacing:-0.05px;width:47px;text-align:right;overflow:hidden;">170003</div>
<div class="t" style="left:448px;top:334px;font-size:11px;line-height:13px;color:#000;letter-spacing:-0.15px;width:159px;text-align:left;overflow:hidden;">Mahnungen</div>
<div class="t" style="left:610px;top:334px;font-size:11px;line-height:13px;color:#000;letter-spacing:-0.15px;width:76px;text-align:left;overflow:hidden;">ifr</div>
<div class="t" style="left:689px;top:334px;font-size:11px;line-height:13px;color:#000;letter-spacing:-0.05px;width:61px;text-align:left;overflow:hidden;">11.12.2018</div>
<div class="t" style="left:753px;top:334px;font-size:11px;line-height:13px;color:#000;letter-spacing:-0.15px;width:76px;text-align:left;overflow:hidden;">ifr</div>
<div class="t" style="left:832px;top:334px;font-size:11px;line-height:13px;color:#000;letter-spacing:-0.05px;width:75px;text-align:left;overflow:hidden;">11.12.2018</div>
<div class="t" style="left:910px;top:334px;font-size:11px;line-height:13px;color:#000;letter-spacing:-0.15px;width:72px;text-align:left;overflow:hidden;">ifr</div>
<div class="t" style="left:985px;top:334px;font-size:11px;line-height:13px;color:#000;letter-spacing:-0.05px;width:67px;text-align:left;overflow:hidden;">11.12.2018</div>
<div class="t" style="left:1055px;top:334px;font-size:11px;line-height:13px;color:#000;letter-spacing:-0.15px;width:72px;text-align:left;overflow:hidden;">ifr</div>
<div class="t" style="left:1130px;top:334px;font-size:11px;line-height:13px;color:#000;letter-spacing:-0.05px;width:67px;text-align:left;overflow:hidden;">11.12.2018</div>
<div class="t" style="left:1197px;top:334px;font-size:11px;line-height:13px;color:#000;letter-spacing:-0.05px;width:16px;text-align:right;overflow:hidden;">2</div>
<div class="t" style="left:1220px;top:334px;font-size:11px;line-height:13px;color:#000;letter-spacing:-0.05px;width:67px;text-align:left;overflow:hidden;">11.12.2018</div>
<div class="t" style="left:1288px;top:334px;width:96px;height:16px;overflow:hidden;font-size:11px;line-height:13px;letter-spacing:-0.15px;"><div style="position:absolute;left:50%;transform:translateX(-50%);white-space:nowrap">0000002</div></div>
<div class="t" style="left:1385px;top:334px;width:79px;height:16px;overflow:hidden;font-size:11px;line-height:13px;letter-spacing:-0.15px;"><div style="position:absolute;left:50%;transform:translateX(-50%);white-space:nowrap">MSAS170003A</div></div>
<div class="t" style="left:1465px;top:334px;width:49px;height:16px;overflow:hidden;font-size:11px;line-height:13px;letter-spacing:-0.15px;"><div style="position:absolute;left:50%;transform:translateX(-50%);white-space:nowrap">9002</div></div>
<div class="t" style="left:1515px;top:334px;width:119px;height:16px;overflow:hidden;font-size:11px;line-height:13px;letter-spacing:-0.5px;"><div style="position:absolute;left:-4px;white-space:nowrap">AAAAAAA-EEEE-OOO-SSS</div></div>
<div class="r" style="left:394px;top:351px;width:1240px;height:18px;background:#ccf5cc;"></div>
<div class="r" style="left:374px;top:369px;width:20px;height:1px;background:#e0e0e0;"></div>
<div class="r" style="left:394px;top:369px;width:1240px;height:1px;background-image:repeating-linear-gradient(to right,#000 0,#000 1px,transparent 1px,transparent 2px);"></div>
<div class="t" style="left:394px;top:353px;font-size:11px;line-height:13px;color:#000;letter-spacing:-0.05px;width:47px;text-align:right;overflow:hidden;">170003</div>
<div class="t" style="left:448px;top:353px;font-size:11px;line-height:13px;color:#000;letter-spacing:-0.15px;width:159px;text-align:left;overflow:hidden;">Mahnungen</div>
<div class="t" style="left:610px;top:353px;font-size:11px;line-height:13px;color:#000;letter-spacing:-0.15px;width:76px;text-align:left;overflow:hidden;">ifr</div>
<div class="t" style="left:689px;top:353px;font-size:11px;line-height:13px;color:#000;letter-spacing:-0.05px;width:61px;text-align:left;overflow:hidden;">11.12.2018</div>
<div class="t" style="left:753px;top:353px;font-size:11px;line-height:13px;color:#000;letter-spacing:-0.15px;width:76px;text-align:left;overflow:hidden;">ifr</div>
<div class="t" style="left:832px;top:353px;font-size:11px;line-height:13px;color:#000;letter-spacing:-0.05px;width:75px;text-align:left;overflow:hidden;">11.12.2018</div>
<div class="t" style="left:910px;top:353px;font-size:11px;line-height:13px;color:#000;letter-spacing:-0.15px;width:72px;text-align:left;overflow:hidden;">ifr</div>
<div class="t" style="left:985px;top:353px;font-size:11px;line-height:13px;color:#000;letter-spacing:-0.05px;width:67px;text-align:left;overflow:hidden;">11.12.2018</div>
<div class="t" style="left:1055px;top:353px;font-size:11px;line-height:13px;color:#000;letter-spacing:-0.15px;width:72px;text-align:left;overflow:hidden;">ifr</div>
<div class="t" style="left:1130px;top:353px;font-size:11px;line-height:13px;color:#000;letter-spacing:-0.05px;width:67px;text-align:left;overflow:hidden;">11.12.2018</div>
<div class="t" style="left:1197px;top:353px;font-size:11px;line-height:13px;color:#000;letter-spacing:-0.05px;width:16px;text-align:right;overflow:hidden;">2</div>
<div class="t" style="left:1220px;top:353px;font-size:11px;line-height:13px;color:#000;letter-spacing:-0.05px;width:67px;text-align:left;overflow:hidden;">11.12.2018</div>
<div class="t" style="left:1288px;top:353px;width:96px;height:16px;overflow:hidden;font-size:11px;line-height:13px;letter-spacing:-0.15px;"><div style="position:absolute;left:50%;transform:translateX(-50%);white-space:nowrap">0000002</div></div>
<div class="t" style="left:1385px;top:353px;width:79px;height:16px;overflow:hidden;font-size:11px;line-height:13px;letter-spacing:-0.15px;"><div style="position:absolute;left:50%;transform:translateX(-50%);white-space:nowrap">MSAS170003A</div></div>
<div class="t" style="left:1465px;top:353px;width:49px;height:16px;overflow:hidden;font-size:11px;line-height:13px;letter-spacing:-0.15px;"><div style="position:absolute;left:50%;transform:translateX(-50%);white-space:nowrap">9000</div></div>
<div class="t" style="left:1515px;top:353px;width:119px;height:16px;overflow:hidden;font-size:11px;line-height:13px;letter-spacing:-0.15px;"><div style="position:absolute;left:50%;transform:translateX(-50%);white-space:nowrap">MSAS170002A</div></div>
<div class="r" style="left:374px;top:388px;width:20px;height:1px;background:#e0e0e0;"></div>
<div class="r" style="left:394px;top:388px;width:1240px;height:1px;background-image:repeating-linear-gradient(to right,#000 0,#000 1px,transparent 1px,transparent 2px);"></div>
<div class="t" style="left:394px;top:372px;font-size:11px;line-height:13px;color:#000;letter-spacing:-0.05px;width:47px;text-align:right;overflow:hidden;">170003</div>
<div class="t" style="left:448px;top:372px;font-size:11px;line-height:13px;color:#000;letter-spacing:-0.15px;width:159px;text-align:left;overflow:hidden;">Mahnungen</div>
<div class="t" style="left:610px;top:372px;font-size:11px;line-height:13px;color:#000;letter-spacing:-0.15px;width:76px;text-align:left;overflow:hidden;">ifr</div>
<div class="t" style="left:689px;top:372px;font-size:11px;line-height:13px;color:#000;letter-spacing:-0.05px;width:61px;text-align:left;overflow:hidden;">11.12.2018</div>
<div class="t" style="left:753px;top:372px;font-size:11px;line-height:13px;color:#000;letter-spacing:-0.15px;width:76px;text-align:left;overflow:hidden;">ifr</div>
<div class="t" style="left:832px;top:372px;font-size:11px;line-height:13px;color:#000;letter-spacing:-0.05px;width:75px;text-align:left;overflow:hidden;">11.12.2018</div>
<div class="t" style="left:910px;top:372px;font-size:11px;line-height:13px;color:#000;letter-spacing:-0.15px;width:72px;text-align:left;overflow:hidden;">ifr</div>
<div class="t" style="left:985px;top:372px;font-size:11px;line-height:13px;color:#000;letter-spacing:-0.05px;width:67px;text-align:left;overflow:hidden;">11.12.2018</div>
<div class="t" style="left:1055px;top:372px;font-size:11px;line-height:13px;color:#000;letter-spacing:-0.15px;width:72px;text-align:left;overflow:hidden;">ifr</div>
<div class="t" style="left:1130px;top:372px;font-size:11px;line-height:13px;color:#000;letter-spacing:-0.05px;width:67px;text-align:left;overflow:hidden;">11.12.2018</div>
<div class="t" style="left:1197px;top:372px;font-size:11px;line-height:13px;color:#000;letter-spacing:-0.05px;width:16px;text-align:right;overflow:hidden;">2</div>
<div class="t" style="left:1220px;top:372px;font-size:11px;line-height:13px;color:#000;letter-spacing:-0.05px;width:67px;text-align:left;overflow:hidden;">11.12.2018</div>
<div class="t" style="left:1288px;top:372px;width:96px;height:16px;overflow:hidden;font-size:11px;line-height:13px;letter-spacing:-0.15px;"><div style="position:absolute;left:50%;transform:translateX(-50%);white-space:nowrap">0000003</div></div>
<div class="t" style="left:1385px;top:372px;width:79px;height:16px;overflow:hidden;font-size:11px;line-height:13px;letter-spacing:-0.15px;"><div style="position:absolute;left:50%;transform:translateX(-50%);white-space:nowrap">MSAS170003A</div></div>
<div class="t" style="left:1465px;top:372px;width:49px;height:16px;overflow:hidden;font-size:11px;line-height:13px;letter-spacing:-0.15px;"><div style="position:absolute;left:50%;transform:translateX(-50%);white-space:nowrap">9000</div></div>
<div class="t" style="left:1515px;top:372px;width:119px;height:16px;overflow:hidden;font-size:11px;line-height:13px;letter-spacing:-0.15px;"><div style="position:absolute;left:50%;transform:translateX(-50%);white-space:nowrap">MSAS170002A</div></div>
<div class="r" style="left:374px;top:407px;width:20px;height:1px;background:#e0e0e0;"></div>
<div class="r" style="left:394px;top:407px;width:1240px;height:1px;background-image:repeating-linear-gradient(to right,#000 0,#000 1px,transparent 1px,transparent 2px);"></div>
<div class="t" style="left:394px;top:391px;font-size:11px;line-height:13px;color:#000;letter-spacing:-0.05px;width:47px;text-align:right;overflow:hidden;">170003</div>
<div class="t" style="left:448px;top:391px;font-size:11px;line-height:13px;color:#000;letter-spacing:-0.15px;width:159px;text-align:left;overflow:hidden;">Mahnungen</div>
<div class="t" style="left:610px;top:391px;font-size:11px;line-height:13px;color:#000;letter-spacing:-0.15px;width:76px;text-align:left;overflow:hidden;">ifr</div>
<div class="t" style="left:689px;top:391px;font-size:11px;line-height:13px;color:#000;letter-spacing:-0.05px;width:61px;text-align:left;overflow:hidden;">11.12.2018</div>
<div class="t" style="left:753px;top:391px;font-size:11px;line-height:13px;color:#000;letter-spacing:-0.15px;width:76px;text-align:left;overflow:hidden;">ifr</div>
<div class="t" style="left:832px;top:391px;font-size:11px;line-height:13px;color:#000;letter-spacing:-0.05px;width:75px;text-align:left;overflow:hidden;">11.12.2018</div>
<div class="t" style="left:910px;top:391px;font-size:11px;line-height:13px;color:#000;letter-spacing:-0.15px;width:72px;text-align:left;overflow:hidden;">ifr</div>
<div class="t" style="left:985px;top:391px;font-size:11px;line-height:13px;color:#000;letter-spacing:-0.05px;width:67px;text-align:left;overflow:hidden;">11.12.2018</div>
<div class="t" style="left:1055px;top:391px;font-size:11px;line-height:13px;color:#000;letter-spacing:-0.15px;width:72px;text-align:left;overflow:hidden;">ifr</div>
<div class="t" style="left:1130px;top:391px;font-size:11px;line-height:13px;color:#000;letter-spacing:-0.05px;width:67px;text-align:left;overflow:hidden;">11.12.2018</div>
<div class="t" style="left:1197px;top:391px;font-size:11px;line-height:13px;color:#000;letter-spacing:-0.05px;width:16px;text-align:right;overflow:hidden;">2</div>
<div class="t" style="left:1220px;top:391px;font-size:11px;line-height:13px;color:#000;letter-spacing:-0.05px;width:67px;text-align:left;overflow:hidden;">11.12.2018</div>
<div class="t" style="left:1288px;top:391px;width:96px;height:16px;overflow:hidden;font-size:11px;line-height:13px;letter-spacing:-0.15px;"><div style="position:absolute;left:50%;transform:translateX(-50%);white-space:nowrap">0000003</div></div>
<div class="t" style="left:1385px;top:391px;width:79px;height:16px;overflow:hidden;font-size:11px;line-height:13px;letter-spacing:-0.15px;"><div style="position:absolute;left:50%;transform:translateX(-50%);white-space:nowrap">MSAS170003A</div></div>
<div class="t" style="left:1465px;top:391px;width:49px;height:16px;overflow:hidden;font-size:11px;line-height:13px;letter-spacing:-0.15px;"><div style="position:absolute;left:50%;transform:translateX(-50%);white-space:nowrap">0203</div></div>
<div class="t" style="left:1515px;top:391px;width:119px;height:16px;overflow:hidden;font-size:11px;line-height:13px;letter-spacing:-0.15px;"><div style="position:absolute;left:50%;transform:translateX(-50%);white-space:nowrap">VAS0203001-13</div></div>
<div class="r" style="left:374px;top:426px;width:20px;height:1px;background:#e0e0e0;"></div>
<div class="r" style="left:394px;top:426px;width:1240px;height:1px;background-image:repeating-linear-gradient(to right,#000 0,#000 1px,transparent 1px,transparent 2px);"></div>
<div class="t" style="left:394px;top:410px;font-size:11px;line-height:13px;color:#000;letter-spacing:-0.05px;width:47px;text-align:right;overflow:hidden;">170003</div>
<div class="t" style="left:448px;top:410px;font-size:11px;line-height:13px;color:#000;letter-spacing:-0.15px;width:159px;text-align:left;overflow:hidden;">Mahnungen</div>
<div class="t" style="left:610px;top:410px;font-size:11px;line-height:13px;color:#000;letter-spacing:-0.15px;width:76px;text-align:left;overflow:hidden;">ifr</div>
<div class="t" style="left:689px;top:410px;font-size:11px;line-height:13px;color:#000;letter-spacing:-0.05px;width:61px;text-align:left;overflow:hidden;">11.12.2018</div>
<div class="t" style="left:753px;top:410px;font-size:11px;line-height:13px;color:#000;letter-spacing:-0.15px;width:76px;text-align:left;overflow:hidden;">ifr</div>
<div class="t" style="left:832px;top:410px;font-size:11px;line-height:13px;color:#000;letter-spacing:-0.05px;width:75px;text-align:left;overflow:hidden;">11.12.2018</div>
<div class="t" style="left:910px;top:410px;font-size:11px;line-height:13px;color:#000;letter-spacing:-0.15px;width:72px;text-align:left;overflow:hidden;">ifr</div>
<div class="t" style="left:985px;top:410px;font-size:11px;line-height:13px;color:#000;letter-spacing:-0.05px;width:67px;text-align:left;overflow:hidden;">11.12.2018</div>
<div class="t" style="left:1055px;top:410px;font-size:11px;line-height:13px;color:#000;letter-spacing:-0.15px;width:72px;text-align:left;overflow:hidden;">ifr</div>
<div class="t" style="left:1130px;top:410px;font-size:11px;line-height:13px;color:#000;letter-spacing:-0.05px;width:67px;text-align:left;overflow:hidden;">11.12.2018</div>
<div class="t" style="left:1197px;top:410px;font-size:11px;line-height:13px;color:#000;letter-spacing:-0.05px;width:16px;text-align:right;overflow:hidden;">2</div>
<div class="t" style="left:1220px;top:410px;font-size:11px;line-height:13px;color:#000;letter-spacing:-0.05px;width:67px;text-align:left;overflow:hidden;">11.12.2018</div>
<div class="t" style="left:1288px;top:410px;width:96px;height:16px;overflow:hidden;font-size:11px;line-height:13px;letter-spacing:-0.15px;"><div style="position:absolute;left:50%;transform:translateX(-50%);white-space:nowrap">0000003</div></div>
<div class="t" style="left:1385px;top:410px;width:79px;height:16px;overflow:hidden;font-size:11px;line-height:13px;letter-spacing:-0.15px;"><div style="position:absolute;left:50%;transform:translateX(-50%);white-space:nowrap">MSAS170003A</div></div>
<div class="t" style="left:1465px;top:410px;width:49px;height:16px;overflow:hidden;font-size:11px;line-height:13px;letter-spacing:-0.15px;"><div style="position:absolute;left:50%;transform:translateX(-50%);white-space:nowrap">0203</div></div>
<div class="t" style="left:1515px;top:410px;width:119px;height:16px;overflow:hidden;font-size:11px;line-height:13px;letter-spacing:-0.15px;"><div style="position:absolute;left:50%;transform:translateX(-50%);white-space:nowrap">VAS0203001-13</div></div>
<div class="r" style="left:374px;top:445px;width:20px;height:1px;background:#e0e0e0;"></div>
<div class="r" style="left:394px;top:445px;width:1240px;height:1px;background-image:repeating-linear-gradient(to right,#000 0,#000 1px,transparent 1px,transparent 2px);"></div>
<div class="t" style="left:394px;top:429px;font-size:11px;line-height:13px;color:#000;letter-spacing:-0.05px;width:47px;text-align:right;overflow:hidden;">170003</div>
<div class="t" style="left:448px;top:429px;font-size:11px;line-height:13px;color:#000;letter-spacing:-0.15px;width:159px;text-align:left;overflow:hidden;">Mahnungen</div>
<div class="t" style="left:610px;top:429px;font-size:11px;line-height:13px;color:#000;letter-spacing:-0.15px;width:76px;text-align:left;overflow:hidden;">ifr</div>
<div class="t" style="left:689px;top:429px;font-size:11px;line-height:13px;color:#000;letter-spacing:-0.05px;width:61px;text-align:left;overflow:hidden;">11.12.2018</div>
<div class="t" style="left:753px;top:429px;font-size:11px;line-height:13px;color:#000;letter-spacing:-0.15px;width:76px;text-align:left;overflow:hidden;">ifr</div>
<div class="t" style="left:832px;top:429px;font-size:11px;line-height:13px;color:#000;letter-spacing:-0.05px;width:75px;text-align:left;overflow:hidden;">11.12.2018</div>
<div class="t" style="left:910px;top:429px;font-size:11px;line-height:13px;color:#000;letter-spacing:-0.15px;width:72px;text-align:left;overflow:hidden;">ifr</div>
<div class="t" style="left:985px;top:429px;font-size:11px;line-height:13px;color:#000;letter-spacing:-0.05px;width:67px;text-align:left;overflow:hidden;">11.12.2018</div>
<div class="t" style="left:1055px;top:429px;font-size:11px;line-height:13px;color:#000;letter-spacing:-0.15px;width:72px;text-align:left;overflow:hidden;">ifr</div>
<div class="t" style="left:1130px;top:429px;font-size:11px;line-height:13px;color:#000;letter-spacing:-0.05px;width:67px;text-align:left;overflow:hidden;">11.12.2018</div>
<div class="t" style="left:1197px;top:429px;font-size:11px;line-height:13px;color:#000;letter-spacing:-0.05px;width:16px;text-align:right;overflow:hidden;">2</div>
<div class="t" style="left:1220px;top:429px;font-size:11px;line-height:13px;color:#000;letter-spacing:-0.05px;width:67px;text-align:left;overflow:hidden;">11.12.2018</div>
<div class="t" style="left:1288px;top:429px;width:96px;height:16px;overflow:hidden;font-size:11px;line-height:13px;letter-spacing:-0.15px;"><div style="position:absolute;left:50%;transform:translateX(-50%);white-space:nowrap">0000003</div></div>
<div class="t" style="left:1385px;top:429px;width:79px;height:16px;overflow:hidden;font-size:11px;line-height:13px;letter-spacing:-0.15px;"><div style="position:absolute;left:50%;transform:translateX(-50%);white-space:nowrap">MSAS170003A</div></div>
<div class="t" style="left:1465px;top:429px;width:49px;height:16px;overflow:hidden;font-size:11px;line-height:13px;letter-spacing:-0.15px;"><div style="position:absolute;left:50%;transform:translateX(-50%);white-space:nowrap">0203</div></div>
<div class="t" style="left:1515px;top:429px;width:119px;height:16px;overflow:hidden;font-size:11px;line-height:13px;letter-spacing:-0.15px;"><div style="position:absolute;left:50%;transform:translateX(-50%);white-space:nowrap">VAS0203001-13</div></div>
<div class="r" style="left:374px;top:464px;width:20px;height:1px;background:#e0e0e0;"></div>
<div class="r" style="left:394px;top:464px;width:1240px;height:1px;background-image:repeating-linear-gradient(to right,#000 0,#000 1px,transparent 1px,transparent 2px);"></div>
<div class="t" style="left:394px;top:448px;font-size:11px;line-height:13px;color:#000;letter-spacing:-0.05px;width:47px;text-align:right;overflow:hidden;">170003</div>
<div class="t" style="left:448px;top:448px;font-size:11px;line-height:13px;color:#000;letter-spacing:-0.15px;width:159px;text-align:left;overflow:hidden;">Mahnungen</div>
<div class="t" style="left:610px;top:448px;font-size:11px;line-height:13px;color:#000;letter-spacing:-0.15px;width:76px;text-align:left;overflow:hidden;">ifr</div>
<div class="t" style="left:689px;top:448px;font-size:11px;line-height:13px;color:#000;letter-spacing:-0.05px;width:61px;text-align:left;overflow:hidden;">11.12.2018</div>
<div class="t" style="left:753px;top:448px;font-size:11px;line-height:13px;color:#000;letter-spacing:-0.15px;width:76px;text-align:left;overflow:hidden;">ifr</div>
<div class="t" style="left:832px;top:448px;font-size:11px;line-height:13px;color:#000;letter-spacing:-0.05px;width:75px;text-align:left;overflow:hidden;">11.12.2018</div>
<div class="t" style="left:910px;top:448px;font-size:11px;line-height:13px;color:#000;letter-spacing:-0.15px;width:72px;text-align:left;overflow:hidden;">ifr</div>
<div class="t" style="left:985px;top:448px;font-size:11px;line-height:13px;color:#000;letter-spacing:-0.05px;width:67px;text-align:left;overflow:hidden;">11.12.2018</div>
<div class="t" style="left:1055px;top:448px;font-size:11px;line-height:13px;color:#000;letter-spacing:-0.15px;width:72px;text-align:left;overflow:hidden;">ifr</div>
<div class="t" style="left:1130px;top:448px;font-size:11px;line-height:13px;color:#000;letter-spacing:-0.05px;width:67px;text-align:left;overflow:hidden;">11.12.2018</div>
<div class="t" style="left:1197px;top:448px;font-size:11px;line-height:13px;color:#000;letter-spacing:-0.05px;width:16px;text-align:right;overflow:hidden;">2</div>
<div class="t" style="left:1220px;top:448px;font-size:11px;line-height:13px;color:#000;letter-spacing:-0.05px;width:67px;text-align:left;overflow:hidden;">11.12.2018</div>
<div class="t" style="left:1288px;top:448px;width:96px;height:16px;overflow:hidden;font-size:11px;line-height:13px;letter-spacing:-0.15px;"><div style="position:absolute;left:50%;transform:translateX(-50%);white-space:nowrap">0000003</div></div>
<div class="t" style="left:1385px;top:448px;width:79px;height:16px;overflow:hidden;font-size:11px;line-height:13px;letter-spacing:-0.15px;"><div style="position:absolute;left:50%;transform:translateX(-50%);white-space:nowrap">MSAS170003A</div></div>
<div class="t" style="left:1465px;top:448px;width:49px;height:16px;overflow:hidden;font-size:11px;line-height:13px;letter-spacing:-0.15px;"><div style="position:absolute;left:50%;transform:translateX(-50%);white-space:nowrap">0203</div></div>
<div class="t" style="left:1515px;top:448px;width:119px;height:16px;overflow:hidden;font-size:11px;line-height:13px;letter-spacing:-0.15px;"><div style="position:absolute;left:50%;transform:translateX(-50%);white-space:nowrap">VAS0203001-13</div></div>
<div class="r" style="left:374px;top:483px;width:20px;height:1px;background:#e0e0e0;"></div>
<div class="r" style="left:394px;top:483px;width:1240px;height:1px;background-image:repeating-linear-gradient(to right,#000 0,#000 1px,transparent 1px,transparent 2px);"></div>
<div class="t" style="left:394px;top:467px;font-size:11px;line-height:13px;color:#000;letter-spacing:-0.05px;width:47px;text-align:right;overflow:hidden;">170003</div>
<div class="t" style="left:448px;top:467px;font-size:11px;line-height:13px;color:#000;letter-spacing:-0.15px;width:159px;text-align:left;overflow:hidden;">Mahnungen</div>
<div class="t" style="left:610px;top:467px;font-size:11px;line-height:13px;color:#000;letter-spacing:-0.15px;width:76px;text-align:left;overflow:hidden;">ifr</div>
<div class="t" style="left:689px;top:467px;font-size:11px;line-height:13px;color:#000;letter-spacing:-0.05px;width:61px;text-align:left;overflow:hidden;">11.12.2018</div>
<div class="t" style="left:753px;top:467px;font-size:11px;line-height:13px;color:#000;letter-spacing:-0.15px;width:76px;text-align:left;overflow:hidden;">ifr</div>
<div class="t" style="left:832px;top:467px;font-size:11px;line-height:13px;color:#000;letter-spacing:-0.05px;width:75px;text-align:left;overflow:hidden;">11.12.2018</div>
<div class="t" style="left:910px;top:467px;font-size:11px;line-height:13px;color:#000;letter-spacing:-0.15px;width:72px;text-align:left;overflow:hidden;">ifr</div>
<div class="t" style="left:985px;top:467px;font-size:11px;line-height:13px;color:#000;letter-spacing:-0.05px;width:67px;text-align:left;overflow:hidden;">11.12.2018</div>
<div class="t" style="left:1055px;top:467px;font-size:11px;line-height:13px;color:#000;letter-spacing:-0.15px;width:72px;text-align:left;overflow:hidden;">ifr</div>
<div class="t" style="left:1130px;top:467px;font-size:11px;line-height:13px;color:#000;letter-spacing:-0.05px;width:67px;text-align:left;overflow:hidden;">11.12.2018</div>
<div class="t" style="left:1197px;top:467px;font-size:11px;line-height:13px;color:#000;letter-spacing:-0.05px;width:16px;text-align:right;overflow:hidden;">2</div>
<div class="t" style="left:1220px;top:467px;font-size:11px;line-height:13px;color:#000;letter-spacing:-0.05px;width:67px;text-align:left;overflow:hidden;">11.12.2018</div>
<div class="t" style="left:1288px;top:467px;width:96px;height:16px;overflow:hidden;font-size:11px;line-height:13px;letter-spacing:-0.15px;"><div style="position:absolute;left:50%;transform:translateX(-50%);white-space:nowrap">0000003</div></div>
<div class="t" style="left:1385px;top:467px;width:79px;height:16px;overflow:hidden;font-size:11px;line-height:13px;letter-spacing:-0.15px;"><div style="position:absolute;left:50%;transform:translateX(-50%);white-space:nowrap">MSAS170003A</div></div>
<div class="t" style="left:1465px;top:467px;width:49px;height:16px;overflow:hidden;font-size:11px;line-height:13px;letter-spacing:-0.15px;"><div style="position:absolute;left:50%;transform:translateX(-50%);white-space:nowrap">0203</div></div>
<div class="t" style="left:1515px;top:467px;width:119px;height:16px;overflow:hidden;font-size:11px;line-height:13px;letter-spacing:-0.15px;"><div style="position:absolute;left:50%;transform:translateX(-50%);white-space:nowrap">VAS0203001-14</div></div>
<div class="r" style="left:374px;top:502px;width:20px;height:1px;background:#e0e0e0;"></div>
<div class="r" style="left:394px;top:502px;width:1240px;height:1px;background-image:repeating-linear-gradient(to right,#000 0,#000 1px,transparent 1px,transparent 2px);"></div>
<div class="t" style="left:394px;top:486px;font-size:11px;line-height:13px;color:#000;letter-spacing:-0.05px;width:47px;text-align:right;overflow:hidden;">170003</div>
<div class="t" style="left:448px;top:486px;font-size:11px;line-height:13px;color:#000;letter-spacing:-0.15px;width:159px;text-align:left;overflow:hidden;">Mahnungen</div>
<div class="t" style="left:610px;top:486px;font-size:11px;line-height:13px;color:#000;letter-spacing:-0.15px;width:76px;text-align:left;overflow:hidden;">ifr</div>
<div class="t" style="left:689px;top:486px;font-size:11px;line-height:13px;color:#000;letter-spacing:-0.05px;width:61px;text-align:left;overflow:hidden;">11.12.2018</div>
<div class="t" style="left:753px;top:486px;font-size:11px;line-height:13px;color:#000;letter-spacing:-0.15px;width:76px;text-align:left;overflow:hidden;">ifr</div>
<div class="t" style="left:832px;top:486px;font-size:11px;line-height:13px;color:#000;letter-spacing:-0.05px;width:75px;text-align:left;overflow:hidden;">11.12.2018</div>
<div class="t" style="left:910px;top:486px;font-size:11px;line-height:13px;color:#000;letter-spacing:-0.15px;width:72px;text-align:left;overflow:hidden;">ifr</div>
<div class="t" style="left:985px;top:486px;font-size:11px;line-height:13px;color:#000;letter-spacing:-0.05px;width:67px;text-align:left;overflow:hidden;">11.12.2018</div>
<div class="t" style="left:1055px;top:486px;font-size:11px;line-height:13px;color:#000;letter-spacing:-0.15px;width:72px;text-align:left;overflow:hidden;">ifr</div>
<div class="t" style="left:1130px;top:486px;font-size:11px;line-height:13px;color:#000;letter-spacing:-0.05px;width:67px;text-align:left;overflow:hidden;">11.12.2018</div>
<div class="t" style="left:1197px;top:486px;font-size:11px;line-height:13px;color:#000;letter-spacing:-0.05px;width:16px;text-align:right;overflow:hidden;">2</div>
<div class="t" style="left:1220px;top:486px;font-size:11px;line-height:13px;color:#000;letter-spacing:-0.05px;width:67px;text-align:left;overflow:hidden;">11.12.2018</div>
<div class="t" style="left:1288px;top:486px;width:96px;height:16px;overflow:hidden;font-size:11px;line-height:13px;letter-spacing:-0.15px;"><div style="position:absolute;left:50%;transform:translateX(-50%);white-space:nowrap">0000003</div></div>
<div class="t" style="left:1385px;top:486px;width:79px;height:16px;overflow:hidden;font-size:11px;line-height:13px;letter-spacing:-0.15px;"><div style="position:absolute;left:50%;transform:translateX(-50%);white-space:nowrap">MSAS170003A</div></div>
<div class="t" style="left:1465px;top:486px;width:49px;height:16px;overflow:hidden;font-size:11px;line-height:13px;letter-spacing:-0.15px;"><div style="position:absolute;left:50%;transform:translateX(-50%);white-space:nowrap">0203</div></div>
<div class="t" style="left:1515px;top:486px;width:119px;height:16px;overflow:hidden;font-size:11px;line-height:13px;letter-spacing:-0.15px;"><div style="position:absolute;left:50%;transform:translateX(-50%);white-space:nowrap">VAS0203001-14</div></div>
<div class="r" style="left:374px;top:521px;width:20px;height:1px;background:#e0e0e0;"></div>
<div class="r" style="left:394px;top:521px;width:1240px;height:1px;background-image:repeating-linear-gradient(to right,#000 0,#000 1px,transparent 1px,transparent 2px);"></div>
<div class="t" style="left:394px;top:505px;font-size:11px;line-height:13px;color:#000;letter-spacing:-0.05px;width:47px;text-align:right;overflow:hidden;">170003</div>
<div class="t" style="left:448px;top:505px;font-size:11px;line-height:13px;color:#000;letter-spacing:-0.15px;width:159px;text-align:left;overflow:hidden;">Mahnungen</div>
<div class="t" style="left:610px;top:505px;font-size:11px;line-height:13px;color:#000;letter-spacing:-0.15px;width:76px;text-align:left;overflow:hidden;">ifr</div>
<div class="t" style="left:689px;top:505px;font-size:11px;line-height:13px;color:#000;letter-spacing:-0.05px;width:61px;text-align:left;overflow:hidden;">11.12.2018</div>
<div class="t" style="left:753px;top:505px;font-size:11px;line-height:13px;color:#000;letter-spacing:-0.15px;width:76px;text-align:left;overflow:hidden;">ifr</div>
<div class="t" style="left:832px;top:505px;font-size:11px;line-height:13px;color:#000;letter-spacing:-0.05px;width:75px;text-align:left;overflow:hidden;">11.12.2018</div>
<div class="t" style="left:910px;top:505px;font-size:11px;line-height:13px;color:#000;letter-spacing:-0.15px;width:72px;text-align:left;overflow:hidden;">ifr</div>
<div class="t" style="left:985px;top:505px;font-size:11px;line-height:13px;color:#000;letter-spacing:-0.05px;width:67px;text-align:left;overflow:hidden;">11.12.2018</div>
<div class="t" style="left:1055px;top:505px;font-size:11px;line-height:13px;color:#000;letter-spacing:-0.15px;width:72px;text-align:left;overflow:hidden;">ifr</div>
<div class="t" style="left:1130px;top:505px;font-size:11px;line-height:13px;color:#000;letter-spacing:-0.05px;width:67px;text-align:left;overflow:hidden;">11.12.2018</div>
<div class="t" style="left:1197px;top:505px;font-size:11px;line-height:13px;color:#000;letter-spacing:-0.05px;width:16px;text-align:right;overflow:hidden;">2</div>
<div class="t" style="left:1220px;top:505px;font-size:11px;line-height:13px;color:#000;letter-spacing:-0.05px;width:67px;text-align:left;overflow:hidden;">11.12.2018</div>
<div class="t" style="left:1288px;top:505px;width:96px;height:16px;overflow:hidden;font-size:11px;line-height:13px;letter-spacing:-0.15px;"><div style="position:absolute;left:50%;transform:translateX(-50%);white-space:nowrap">0000003</div></div>
<div class="t" style="left:1385px;top:505px;width:79px;height:16px;overflow:hidden;font-size:11px;line-height:13px;letter-spacing:-0.15px;"><div style="position:absolute;left:50%;transform:translateX(-50%);white-space:nowrap">MSAS170003A</div></div>
<div class="t" style="left:1465px;top:505px;width:49px;height:16px;overflow:hidden;font-size:11px;line-height:13px;letter-spacing:-0.15px;"><div style="position:absolute;left:50%;transform:translateX(-50%);white-space:nowrap">0203</div></div>
<div class="t" style="left:1515px;top:505px;width:119px;height:16px;overflow:hidden;font-size:11px;line-height:13px;letter-spacing:-0.15px;"><div style="position:absolute;left:50%;transform:translateX(-50%);white-space:nowrap">VAS0203001-15</div></div>
<div class="t" style="left:394px;top:524px;font-size:11px;line-height:13px;color:#000;letter-spacing:-0.05px;width:47px;text-align:right;overflow:hidden;">170003</div>
<div class="t" style="left:448px;top:524px;font-size:11px;line-height:13px;color:#000;letter-spacing:-0.15px;width:159px;text-align:left;overflow:hidden;">Mahnungen</div>
<div class="t" style="left:610px;top:524px;font-size:11px;line-height:13px;color:#000;letter-spacing:-0.15px;width:76px;text-align:left;overflow:hidden;">ifr</div>
<div class="t" style="left:689px;top:524px;font-size:11px;line-height:13px;color:#000;letter-spacing:-0.05px;width:61px;text-align:left;overflow:hidden;">11.12.2018</div>
<div class="t" style="left:753px;top:524px;font-size:11px;line-height:13px;color:#000;letter-spacing:-0.15px;width:76px;text-align:left;overflow:hidden;">ifr</div>
<div class="t" style="left:832px;top:524px;font-size:11px;line-height:13px;color:#000;letter-spacing:-0.05px;width:75px;text-align:left;overflow:hidden;">11.12.2018</div>
<div class="t" style="left:910px;top:524px;font-size:11px;line-height:13px;color:#000;letter-spacing:-0.15px;width:72px;text-align:left;overflow:hidden;">ifr</div>
<div class="t" style="left:985px;top:524px;font-size:11px;line-height:13px;color:#000;letter-spacing:-0.05px;width:67px;text-align:left;overflow:hidden;">11.12.2018</div>
<div class="t" style="left:1055px;top:524px;font-size:11px;line-height:13px;color:#000;letter-spacing:-0.15px;width:72px;text-align:left;overflow:hidden;">ifr</div>
<div class="t" style="left:1130px;top:524px;font-size:11px;line-height:13px;color:#000;letter-spacing:-0.05px;width:67px;text-align:left;overflow:hidden;">11.12.2018</div>
<div class="t" style="left:1197px;top:524px;font-size:11px;line-height:13px;color:#000;letter-spacing:-0.05px;width:16px;text-align:right;overflow:hidden;">2</div>
<div class="t" style="left:1220px;top:524px;font-size:11px;line-height:13px;color:#000;letter-spacing:-0.05px;width:67px;text-align:left;overflow:hidden;">11.12.2018</div>
<div class="t" style="left:1288px;top:524px;width:96px;height:16px;overflow:hidden;font-size:11px;line-height:13px;letter-spacing:-0.15px;"><div style="position:absolute;left:50%;transform:translateX(-50%);white-space:nowrap">0000003</div></div>
<div class="t" style="left:1385px;top:524px;width:79px;height:16px;overflow:hidden;font-size:11px;line-height:13px;letter-spacing:-0.15px;"><div style="position:absolute;left:50%;transform:translateX(-50%);white-space:nowrap">MSAS170003A</div></div>
<div class="t" style="left:1465px;top:524px;width:49px;height:16px;overflow:hidden;font-size:11px;line-height:13px;letter-spacing:-0.15px;"><div style="position:absolute;left:50%;transform:translateX(-50%);white-space:nowrap">0203</div></div>
<div class="t" style="left:1515px;top:524px;width:119px;height:16px;overflow:hidden;font-size:11px;line-height:13px;letter-spacing:-0.15px;"><div style="position:absolute;left:50%;transform:translateX(-50%);white-space:nowrap">VAS0203001-15</div></div>
<div class="r" style="left:445px;top:256px;width:1px;height:283px;background-image:repeating-linear-gradient(to bottom,#000 0,#000 1px,transparent 1px,transparent 2px);"></div>
<div class="r" style="left:607px;top:256px;width:1px;height:283px;background-image:repeating-linear-gradient(to bottom,#000 0,#000 1px,transparent 1px,transparent 2px);"></div>
<div class="r" style="left:686px;top:256px;width:1px;height:283px;background-image:repeating-linear-gradient(to bottom,#000 0,#000 1px,transparent 1px,transparent 2px);"></div>
<div class="r" style="left:750px;top:256px;width:1px;height:283px;background-image:repeating-linear-gradient(to bottom,#000 0,#000 1px,transparent 1px,transparent 2px);"></div>
<div class="r" style="left:829px;top:256px;width:1px;height:283px;background-image:repeating-linear-gradient(to bottom,#000 0,#000 1px,transparent 1px,transparent 2px);"></div>
<div class="r" style="left:907px;top:256px;width:1px;height:283px;background-image:repeating-linear-gradient(to bottom,#000 0,#000 1px,transparent 1px,transparent 2px);"></div>
<div class="r" style="left:982px;top:256px;width:1px;height:283px;background-image:repeating-linear-gradient(to bottom,#000 0,#000 1px,transparent 1px,transparent 2px);"></div>
<div class="r" style="left:1052px;top:256px;width:1px;height:283px;background-image:repeating-linear-gradient(to bottom,#000 0,#000 1px,transparent 1px,transparent 2px);"></div>
<div class="r" style="left:1127px;top:256px;width:1px;height:283px;background-image:repeating-linear-gradient(to bottom,#000 0,#000 1px,transparent 1px,transparent 2px);"></div>
<div class="r" style="left:1197px;top:256px;width:1px;height:283px;background-image:repeating-linear-gradient(to bottom,#000 0,#000 1px,transparent 1px,transparent 2px);"></div>
<div class="r" style="left:1217px;top:256px;width:1px;height:283px;background-image:repeating-linear-gradient(to bottom,#000 0,#000 1px,transparent 1px,transparent 2px);"></div>
<div class="r" style="left:1287px;top:256px;width:1px;height:283px;background-image:repeating-linear-gradient(to bottom,#000 0,#000 1px,transparent 1px,transparent 2px);"></div>
<div class="r" style="left:1384px;top:256px;width:1px;height:283px;background-image:repeating-linear-gradient(to bottom,#000 0,#000 1px,transparent 1px,transparent 2px);"></div>
<div class="r" style="left:1464px;top:256px;width:1px;height:283px;background-image:repeating-linear-gradient(to bottom,#000 0,#000 1px,transparent 1px,transparent 2px);"></div>
<div class="r" style="left:1514px;top:256px;width:1px;height:283px;background-image:repeating-linear-gradient(to bottom,#000 0,#000 1px,transparent 1px,transparent 2px);"></div>
<div class="r" style="left:1634px;top:256px;width:1px;height:283px;background:#fff;background-image:repeating-linear-gradient(to bottom,#000 0,#000 1px,transparent 1px,transparent 2px);"></div>
<div class="r" style="left:1635px;top:256px;width:1px;height:283px;background:#5a5a5a;"></div>
<div class="r" style="left:374px;top:254px;width:1260px;height:1px;background:#000;"></div>
<div class="r" style="left:374px;top:255px;width:1260px;height:1px;background:#000;background-image:repeating-linear-gradient(to right,#fff 0,#fff 1px,transparent 1px,transparent 2px);"></div>
<div class="r" style="left:374px;top:273px;width:1262px;height:3px;background:#000;"></div>
<div class="r" style="left:374px;top:274px;width:1262px;height:1px;background-image:repeating-linear-gradient(to right,#fff 0,#fff 1px,transparent 1px,transparent 2px);"></div>
<div class="r" style="left:372px;top:547px;width:1257px;height:16px;border:1px solid #bcbcbc;background:#e6e6e6;"></div>
<div class="r" style="left:1629px;top:547px;width:26px;height:15px;border:1px solid #a0a0a0;background:#f0f0f0;"></div>
<div class="t" style="left:1634px;top:549px;font-size:8.5px;line-height:10px;color:#333;letter-spacing:0.2px;">0 / 0</div>
<div class="r" style="left:373px;top:566px;width:88px;height:23px;border:1px solid #adadad;background:#e1e1e1;"></div>
<div class="t" style="left:399px;top:572px;font-size:11px;line-height:13px;color:#000;letter-spacing:-0.15px;">Zurück</div>
<div class="r" style="left:1545px;top:566px;width:110px;height:23px;border:1px solid #adadad;background:#e1e1e1;"></div>
<div class="t" style="left:1553px;top:572px;font-size:11px;line-height:13px;color:#000;letter-spacing:-0.15px;">Bescheide drucken</div>
</body></html>
